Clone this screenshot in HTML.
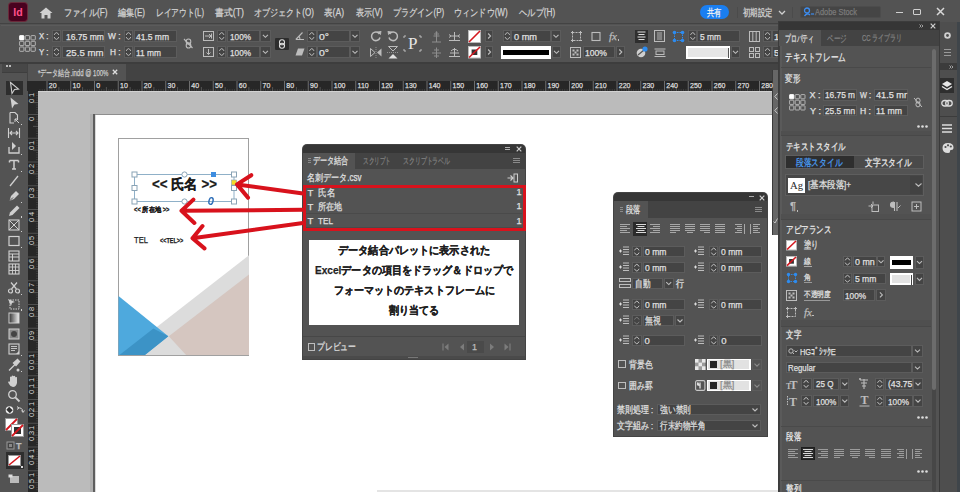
<!DOCTYPE html>
<html><head><meta charset="utf-8"><style>
*{margin:0;padding:0;box-sizing:border-box}
html,body{width:960px;height:492px;overflow:hidden;background:#535353;font-family:"Liberation Sans",sans-serif;color:#d4d4d4;position:relative}
.a{position:absolute}
.t{position:absolute;white-space:nowrap;line-height:1;transform-origin:0 50%;-webkit-text-stroke:0.25px currentColor}
svg.a{overflow:visible}
</style></head><body>
<div class="a" style="left:0px;top:0px;width:960px;height:24px;background:#535353;"></div>
<div class="a" style="left:0px;top:23px;width:960px;height:1px;background:#434343;"></div>
<div class="a" style="left:0px;top:24px;width:960px;height:38px;background:#535353;"></div>
<div class="a" style="left:1px;top:25px;width:958px;height:1px;background:#5b5b5b;"></div>
<div class="a" style="left:0px;top:62px;width:960px;height:2px;background:#3d3d3d;"></div>
<div class="a" style="left:0px;top:64px;width:27px;height:428px;background:#535353;"></div>
<div class="a" style="left:2px;top:64px;width:25px;height:9px;background:#474747;"></div>
<div class="a" style="left:2px;top:72px;width:25px;height:1px;background:#3e3e3e;"></div>
<svg class="a" style="left:6px;top:65px" width="6" height="3"><rect x="0" y="0" width="2" height="2" fill="#bbb"/><rect x="3" y="0" width="2" height="2" fill="#bbb"/></svg>
<div class="a" style="left:27px;top:64px;width:745px;height:17px;background:#434343;"></div>
<div class="a" style="left:28px;top:64px;width:98px;height:17px;background:#535353;"></div>
<div class="a" style="left:27px;top:81px;width:745px;height:10px;background:#272727;"></div>
<div class="a" style="left:28px;top:91px;width:10px;height:401px;background:#272727;"></div>
<div class="a" style="left:38px;top:91px;width:734px;height:401px;background:#bbbbbb;"></div>
<div class="a" style="left:94px;top:114px;width:685px;height:378px;background:#ffffff;"></div>
<div class="a" style="left:94px;top:114px;width:685px;height:1px;background:#8e8e8e;"></div>
<div class="a" style="left:90px;top:114px;width:2.7px;height:378px;background:#b0b0b0;"></div>
<div class="a" style="left:92.7px;top:114px;width:2px;height:378px;background:#5e5e5e;"></div>
<div class="a" style="left:94.7px;top:115px;width:1px;height:377px;background:#dadada;"></div>
<div class="a" style="left:772px;top:64px;width:7px;height:6px;background:#434343;"></div>
<div class="a" style="left:772px;top:70px;width:7px;height:165px;background:#535353;"></div>
<div class="a" style="left:772.5px;top:70px;width:5px;height:165px;background:#666666;"></div>
<div class="a" style="left:772px;top:70px;width:1px;height:165px;background:#3a3a3a;"></div>
<div class="a" style="left:9px;top:3px;width:18px;height:18px;background:#49021f;border-radius:3px;box-shadow:0 0 0 1px #6a2a3a"></div>
<div class="a" style="left:9px;top:3px;width:18px;height:18px;color:#ff4f8b;font:bold 10.5px/18px 'Liberation Sans',sans-serif;text-align:center">Id</div>
<svg class="a" style="left:39px;top:7px;" width="14" height="12" viewBox="0 0 14 12"><path d="M7 0.5 L13.5 6 L11.5 6 L11.5 11.5 L8.5 11.5 L8.5 8 L5.5 8 L5.5 11.5 L2.5 11.5 L2.5 6 L0.5 6 Z" fill="#d0d0d0"/></svg>
<div class="t" id="t0" style="left:64px;top:7.5px;font-size:10px;color:#d2d2d2;font-family:'Liberation Sans',sans-serif;transform:scaleX(0.824);">ファイル(F)</div>
<div class="t" id="t1" style="left:118px;top:7.5px;font-size:10px;color:#d2d2d2;font-family:'Liberation Sans',sans-serif;transform:scaleX(0.810);">編集(E)</div>
<div class="t" id="t2" style="left:156px;top:7.5px;font-size:10px;color:#d2d2d2;font-family:'Liberation Sans',sans-serif;transform:scaleX(0.771);">レイアウト(L)</div>
<div class="t" id="t3" style="left:215px;top:7.5px;font-size:10px;color:#d2d2d2;font-family:'Liberation Sans',sans-serif;transform:scaleX(0.885);">書式(T)</div>
<div class="t" id="t4" style="left:253.75px;top:7.5px;font-size:10px;color:#d2d2d2;font-family:'Liberation Sans',sans-serif;transform:scaleX(0.806);">オブジェクト(O)</div>
<div class="t" id="t5" style="left:323.75px;top:7.5px;font-size:10px;color:#d2d2d2;font-family:'Liberation Sans',sans-serif;transform:scaleX(0.857);">表(A)</div>
<div class="t" id="t6" style="left:355.5px;top:7.5px;font-size:10px;color:#d2d2d2;font-family:'Liberation Sans',sans-serif;transform:scaleX(0.801);">表示(V)</div>
<div class="t" id="t7" style="left:392.5px;top:7.5px;font-size:10px;color:#d2d2d2;font-family:'Liberation Sans',sans-serif;transform:scaleX(0.809);">プラグイン(P)</div>
<div class="t" id="t8" style="left:453.75px;top:7.5px;font-size:10px;color:#d2d2d2;font-family:'Liberation Sans',sans-serif;transform:scaleX(0.813);">ウィンドウ(W)</div>
<div class="t" id="t9" style="left:518.75px;top:7.5px;font-size:10px;color:#d2d2d2;font-family:'Liberation Sans',sans-serif;transform:scaleX(0.826);">ヘルプ(H)</div>
<div class="a" style="left:700.3px;top:4.7px;width:29px;height:14.8px;background:#1a7ef0;border-radius:7.4px"></div>
<div class="t" id="t10" style="left:707px;top:7.55px;font-size:9.5px;color:#f4f4f4;font-family:'Liberation Sans',sans-serif;transform:scaleX(0.725);">共有</div>
<div class="a" style="left:737px;top:7px;width:1px;height:11px;background:#4b4b4b;"></div>
<div class="t" id="t11" style="left:743px;top:7.75px;font-size:9.5px;color:#d4d4d4;font-family:'Liberation Sans',sans-serif;transform:scaleX(0.738);">初期設定</div>
<svg class="a" style="left:778px;top:10px;" width="8" height="5" viewBox="0 0 8 5"><path d="M1 1 L4 4 L7 1" stroke="#d0d0d0" stroke-width="1.3" fill="none"/></svg>
<div class="a" style="left:792px;top:7px;width:1px;height:11px;background:#4b4b4b;"></div>
<div class="a" style="left:800px;top:6px;width:81px;height:12px;background:#454545;border-radius:2px;border:1px solid #4c4c4c"></div>
<svg class="a" style="left:803px;top:7px;" width="12" height="10" viewBox="0 0 12 10"><circle cx="4" cy="3.5" r="2.5" stroke="#3d8df0" stroke-width="1.3" fill="none"/><path d="M1.5 9 Q4 5.5 7 8" stroke="#3d8df0" stroke-width="1.3" fill="none"/><path d="M8 7 L11 7" stroke="#3d8df0" stroke-width="1.2"/></svg>
<div class="t" id="t12" style="left:815px;top:8.25px;font-size:8.5px;color:#7b7b7b;font-family:'Liberation Sans',sans-serif;transform:scaleX(0.871);">Adobe Stock</div>
<div class="a" style="left:896px;top:11.5px;width:7px;height:1.5px;background:#d0d0d0;"></div>
<div class="a" style="left:913px;top:8.5px;width:8px;height:6px;border:1.5px solid #d0d0d0;border-radius:1px"></div>
<svg class="a" style="left:936px;top:7px;" width="9" height="9" viewBox="0 0 9 9"><path d="M1 1 L8 8 M8 1 L1 8" stroke="#d8d8d8" stroke-width="1.5"/></svg>
<svg class="a" style="left:19px;top:35px;" width="18" height="18" viewBox="0 0 18 18"><rect x="0.6" y="0.6" width="4.3" height="4.3" rx="0.5" fill="#ffffff" stroke="#ffffff" stroke-width="0.9"/><rect x="6.3" y="0.6" width="4.3" height="4.3" rx="0.5" fill="none" stroke="#bdbdbd" stroke-width="0.9"/><rect x="12.0" y="0.6" width="4.3" height="4.3" rx="0.5" fill="none" stroke="#bdbdbd" stroke-width="0.9"/><rect x="0.6" y="6.3" width="4.3" height="4.3" rx="0.5" fill="none" stroke="#bdbdbd" stroke-width="0.9"/><rect x="6.3" y="6.3" width="4.3" height="4.3" rx="0.5" fill="none" stroke="#bdbdbd" stroke-width="0.9"/><rect x="12.0" y="6.3" width="4.3" height="4.3" rx="0.5" fill="none" stroke="#bdbdbd" stroke-width="0.9"/><rect x="0.6" y="12.0" width="4.3" height="4.3" rx="0.5" fill="none" stroke="#bdbdbd" stroke-width="0.9"/><rect x="6.3" y="12.0" width="4.3" height="4.3" rx="0.5" fill="none" stroke="#bdbdbd" stroke-width="0.9"/><rect x="12.0" y="12.0" width="4.3" height="4.3" rx="0.5" fill="none" stroke="#bdbdbd" stroke-width="0.9"/></svg>
<div class="t" id="t13" style="left:38.5px;top:32px;font-size:9px;color:#e0e0e0;font-family:'Liberation Sans',sans-serif;transform:scaleX(0.862);">X :</div>
<div class="t" id="t14" style="left:38.5px;top:48px;font-size:9px;color:#e0e0e0;font-family:'Liberation Sans',sans-serif;transform:scaleX(0.876);">Y :</div>
<div class="a" style="left:52px;top:30px;width:9px;height:12px;background:#444444;border:1px solid #5c5c5c;"></div>
<svg class="a" style="left:52px;top:30px;" width="9" height="12" viewBox="0 0 9 12"><path d="M2.2 4.9 Q4.5 0.4 6.8 4.9 M2.2 7.1 Q4.5 11.6 6.8 7.1" stroke="#bdbdbd" stroke-width="1" fill="none"/></svg>
<div class="a" style="left:62px;top:30px;width:43px;height:12px;background:#444444;border:1px solid #5c5c5c;"></div>
<div class="t" id="t15" style="left:65.5px;top:31.75px;font-size:9.5px;color:#e0e0e0;font-family:'Liberation Sans',sans-serif;transform:scaleX(0.899);">16.75 mm</div>
<div class="a" style="left:52px;top:46px;width:9px;height:12px;background:#444444;border:1px solid #5c5c5c;"></div>
<svg class="a" style="left:52px;top:46px;" width="9" height="12" viewBox="0 0 9 12"><path d="M2.2 4.9 Q4.5 0.4 6.8 4.9 M2.2 7.1 Q4.5 11.6 6.8 7.1" stroke="#bdbdbd" stroke-width="1" fill="none"/></svg>
<div class="a" style="left:62px;top:46px;width:43px;height:12px;background:#444444;border:1px solid #5c5c5c;"></div>
<div class="t" id="t16" style="left:65.5px;top:47.75px;font-size:9.5px;color:#e0e0e0;font-family:'Liberation Sans',sans-serif;transform:scaleX(1.014);">25.5 mm</div>
<div class="t" id="t17" style="left:108.3px;top:32px;font-size:9px;color:#e0e0e0;font-family:'Liberation Sans',sans-serif;transform:scaleX(0.926);">W :</div>
<div class="t" id="t18" style="left:109.8px;top:48px;font-size:9px;color:#e0e0e0;font-family:'Liberation Sans',sans-serif;transform:scaleX(0.920);">H :</div>
<div class="a" style="left:124px;top:30px;width:9px;height:12px;background:#444444;border:1px solid #5c5c5c;"></div>
<svg class="a" style="left:124px;top:30px;" width="9" height="12" viewBox="0 0 9 12"><path d="M2.2 4.9 Q4.5 0.4 6.8 4.9 M2.2 7.1 Q4.5 11.6 6.8 7.1" stroke="#bdbdbd" stroke-width="1" fill="none"/></svg>
<div class="a" style="left:134px;top:30px;width:43px;height:12px;background:#444444;border:1px solid #5c5c5c;"></div>
<div class="t" id="t19" style="left:136px;top:31.75px;font-size:9.5px;color:#e0e0e0;font-family:'Liberation Sans',sans-serif;transform:scaleX(0.893);">41.5 mm</div>
<div class="a" style="left:124px;top:46px;width:9px;height:12px;background:#444444;border:1px solid #5c5c5c;"></div>
<svg class="a" style="left:124px;top:46px;" width="9" height="12" viewBox="0 0 9 12"><path d="M2.2 4.9 Q4.5 0.4 6.8 4.9 M2.2 7.1 Q4.5 11.6 6.8 7.1" stroke="#bdbdbd" stroke-width="1" fill="none"/></svg>
<div class="a" style="left:134px;top:46px;width:43px;height:12px;background:#444444;border:1px solid #5c5c5c;"></div>
<div class="t" id="t20" style="left:136px;top:47.75px;font-size:9.5px;color:#e0e0e0;font-family:'Liberation Sans',sans-serif;transform:scaleX(0.882);">11 mm</div>
<svg class="a" style="left:183px;top:38px;" width="11" height="11" viewBox="0 0 11 11"><ellipse cx="5.5" cy="3.6" rx="2.3" ry="2.6" fill="none" stroke="#bcbcbc" stroke-width="1.1"/><ellipse cx="5.5" cy="7.4" rx="2.3" ry="2.6" fill="none" stroke="#bcbcbc" stroke-width="1.1"/><path d="M1 1 L9.5 10" stroke="#bcbcbc" stroke-width="1.1"/></svg>
<svg class="a" style="left:203px;top:30px;" width="11" height="12" viewBox="0 0 11 12"><rect x="0.5" y="1.5" width="10" height="9" fill="none" stroke="#bcbcbc" stroke-width="1"/><path d="M2 6 L8 6 M6 4 L8 6 L6 8 M8.5 3.5 L8.5 8.5" stroke="#bcbcbc" stroke-width="1" fill="none"/></svg>
<svg class="a" style="left:203px;top:46px;" width="11" height="12" viewBox="0 0 11 12"><rect x="0.5" y="1.5" width="10" height="9" fill="none" stroke="#bcbcbc" stroke-width="1"/><path d="M5.5 3 L5.5 8.5 M3.5 6.5 L5.5 8.5 L7.5 6.5" stroke="#bcbcbc" stroke-width="1" fill="none"/></svg>
<div class="a" style="left:216.7px;top:30px;width:9.3px;height:12px;background:#444444;border:1px solid #5c5c5c;"></div>
<svg class="a" style="left:216.7px;top:30px;" width="9.3" height="12" viewBox="0 0 9.3 12"><path d="M2.4 4.9 Q4.7 0.4 7.0 4.9 M2.4 7.1 Q4.7 11.6 7.0 7.1" stroke="#bdbdbd" stroke-width="1" fill="none"/></svg>
<div class="a" style="left:226.5px;top:30px;width:33px;height:12px;background:#444444;border:1px solid #5c5c5c;"></div>
<div class="t" id="t21" style="left:229.6px;top:31.75px;font-size:9.5px;color:#e0e0e0;font-family:'Liberation Sans',sans-serif;transform:scaleX(0.864);">100%</div>
<div class="a" style="left:260px;top:30px;width:10.8px;height:12px;background:#444444;border:1px solid #5c5c5c;"></div>
<svg class="a" style="left:260px;top:30px;" width="10.8" height="12" viewBox="0 0 10.8 12"><path d="M2.9 4.8 L5.4 7.3 L7.9 4.8" stroke="#bdbdbd" stroke-width="1.1" fill="none"/></svg>
<div class="a" style="left:216.7px;top:46px;width:9.3px;height:12px;background:#444444;border:1px solid #5c5c5c;"></div>
<svg class="a" style="left:216.7px;top:46px;" width="9.3" height="12" viewBox="0 0 9.3 12"><path d="M2.4 4.9 Q4.7 0.4 7.0 4.9 M2.4 7.1 Q4.7 11.6 7.0 7.1" stroke="#bdbdbd" stroke-width="1" fill="none"/></svg>
<div class="a" style="left:226.5px;top:46px;width:33px;height:12px;background:#444444;border:1px solid #5c5c5c;"></div>
<div class="t" id="t22" style="left:229.6px;top:47.75px;font-size:9.5px;color:#e0e0e0;font-family:'Liberation Sans',sans-serif;transform:scaleX(0.864);">100%</div>
<div class="a" style="left:260px;top:46px;width:10.8px;height:12px;background:#444444;border:1px solid #5c5c5c;"></div>
<svg class="a" style="left:260px;top:46px;" width="10.8" height="12" viewBox="0 0 10.8 12"><path d="M2.9 4.8 L5.4 7.3 L7.9 4.8" stroke="#bdbdbd" stroke-width="1.1" fill="none"/></svg>
<div class="a" style="left:275px;top:37.5px;width:14px;height:12.5px;background:#2d2d2d;border-radius:1px"></div>
<svg class="a" style="left:278px;top:39px;" width="8" height="10" viewBox="0 0 8 10"><rect x="1.5" y="0.8" width="5" height="5" rx="2.4" fill="none" stroke="#e0e0e0" stroke-width="1.1"/><rect x="1.5" y="4.2" width="5" height="5" rx="2.4" fill="none" stroke="#e0e0e0" stroke-width="1.1"/></svg>
<svg class="a" style="left:295px;top:31px;" width="10" height="10" viewBox="0 0 10 10"><path d="M0.8 8.5 L9 8.5 M0.8 8.5 L7.5 1.5 M5 8.5 Q5 6 3.5 5" stroke="#bcbcbc" stroke-width="1.1" fill="none"/></svg>
<svg class="a" style="left:295px;top:47px;" width="10" height="10" viewBox="0 0 10 10"><path d="M3 1.5 L9.5 1.5 L7 8.5 L0.5 8.5 Z" fill="#bcbcbc"/></svg>
<div class="a" style="left:307px;top:30px;width:9.5px;height:12px;background:#444444;border:1px solid #5c5c5c;"></div>
<svg class="a" style="left:307px;top:30px;" width="9.5" height="12" viewBox="0 0 9.5 12"><path d="M2.5 4.9 Q4.8 0.4 7.0 4.9 M2.5 7.1 Q4.8 11.6 7.0 7.1" stroke="#bdbdbd" stroke-width="1" fill="none"/></svg>
<div class="a" style="left:316.5px;top:30px;width:33.5px;height:12px;background:#444444;border:1px solid #5c5c5c;"></div>
<div class="t" id="t23" style="left:319px;top:31.75px;font-size:9.5px;color:#e0e0e0;font-family:'Liberation Sans',sans-serif;transform:scaleX(1.100);">0°</div>
<div class="a" style="left:350px;top:30px;width:10px;height:12px;background:#444444;border:1px solid #5c5c5c;"></div>
<svg class="a" style="left:350px;top:30px;" width="10" height="12" viewBox="0 0 10 12"><path d="M2.5 4.8 L5.0 7.3 L7.5 4.8" stroke="#bdbdbd" stroke-width="1.1" fill="none"/></svg>
<div class="a" style="left:307px;top:46px;width:9.5px;height:12px;background:#444444;border:1px solid #5c5c5c;"></div>
<svg class="a" style="left:307px;top:46px;" width="9.5" height="12" viewBox="0 0 9.5 12"><path d="M2.5 4.9 Q4.8 0.4 7.0 4.9 M2.5 7.1 Q4.8 11.6 7.0 7.1" stroke="#bdbdbd" stroke-width="1" fill="none"/></svg>
<div class="a" style="left:316.5px;top:46px;width:33.5px;height:12px;background:#444444;border:1px solid #5c5c5c;"></div>
<div class="t" id="t24" style="left:319px;top:47.75px;font-size:9.5px;color:#e0e0e0;font-family:'Liberation Sans',sans-serif;transform:scaleX(1.100);">0°</div>
<div class="a" style="left:350px;top:46px;width:10px;height:12px;background:#444444;border:1px solid #5c5c5c;"></div>
<svg class="a" style="left:350px;top:46px;" width="10" height="12" viewBox="0 0 10 12"><path d="M2.5 4.8 L5.0 7.3 L7.5 4.8" stroke="#bdbdbd" stroke-width="1.1" fill="none"/></svg>
<svg class="a" style="left:370px;top:30px;" width="12" height="12" viewBox="0 0 12 12"><path d="M9.5 4 A4.3 4.3 0 1 0 10 7.5" stroke="#bcbcbc" stroke-width="1.5" fill="none"/><path d="M7.5 1.5 L10.5 4.5 L11 1" fill="#bcbcbc" stroke="#bcbcbc" stroke-width="0.8"/></svg>
<svg class="a" style="left:387px;top:30px;" width="12" height="12" viewBox="0 0 12 12"><path d="M2.5 4 A4.3 4.3 0 1 1 2 7.5" stroke="#bcbcbc" stroke-width="1.5" fill="none"/><path d="M4.5 1.5 L1.5 4.5 L1 1" fill="#bcbcbc" stroke="#bcbcbc" stroke-width="0.8"/></svg>
<svg class="a" style="left:370px;top:47px;" width="12" height="11" viewBox="0 0 12 11"><path d="M0.5 1.5 L5 5.5 L0.5 9.5 Z" fill="none" stroke="#bcbcbc" stroke-width="1"/><path d="M11.5 1.5 L7 5.5 L11.5 9.5 Z" fill="#bcbcbc"/><path d="M6 0 L6 11" stroke="#bcbcbc" stroke-width="0.6" stroke-dasharray="1 1"/></svg>
<svg class="a" style="left:387px;top:46px;" width="12" height="13" viewBox="0 0 12 13"><path d="M1.5 0.5 L6 5 L10.5 0.5 Z" fill="none" stroke="#bcbcbc" stroke-width="1"/><path d="M1.5 12.5 L6 8 L10.5 12.5 Z" fill="#e0e0e0"/><path d="M0 6.5 L12 6.5" stroke="#bcbcbc" stroke-width="0.6" stroke-dasharray="1 1"/></svg>
<div class="t" id="t25" style="left:407.5px;top:36px;font-size:16px;color:#e6e6e6;font-family:'Liberation Serif',serif;transform:scaleX(1.067);-webkit-text-stroke:0;">P</div>
<svg class="a" style="left:403px;top:34px;" width="19" height="19" viewBox="0 0 19 19"><path d="M1 4 L1 2 M1 2 L3 2 M16 2 L18 2 L18 4 M1 15 L1 17 L3 17 M16 17 L18 17 L18 15" stroke="#bcbcbc" stroke-width="1" fill="none"/></svg>
<svg class="a" style="left:431px;top:31px;" width="11" height="12" viewBox="0 0 11 12"><path d="M5.5 0.5 L5.5 11 M2.5 5 L8.5 5 M1 11 L10 11 M3 3 L8 3" stroke="#8e8e8e" stroke-width="1" fill="none"/><circle cx="5.5" cy="1.5" r="1" fill="#8e8e8e"/></svg>
<svg class="a" style="left:431px;top:47px;" width="11" height="12" viewBox="0 0 11 12"><path d="M5.5 0.5 L5.5 11 M1 6 L10 6 M3 3 L8 3 M3 9 L8 9" stroke="#8e8e8e" stroke-width="1" fill="none"/></svg>
<svg class="a" style="left:448px;top:31px;" width="13" height="11" viewBox="0 0 13 11"><path d="M6.5 1 L6.5 10 M1 9.5 L12 9.5 M3 5 L10 5 M1 6.5 L3 5 L1 3.5 M12 6.5 L10 5 L12 3.5" stroke="#bcbcbc" stroke-width="1" fill="none"/></svg>
<svg class="a" style="left:448px;top:47px;" width="13" height="11" viewBox="0 0 13 11"><path d="M6.5 1 L6.5 10 M1 9.5 L12 9.5 M2 6 L11 6 M3 4 Q6.5 0.5 10 4" stroke="#bcbcbc" stroke-width="1" fill="none"/></svg>
<svg class="a" style="left:468px;top:29.5px;" width="13" height="13" viewBox="0 0 13 13"><rect x="0.5" y="0.5" width="12" height="12" fill="#ffffff" stroke="#bbbbbb" stroke-width="1"/><path d="M1 12 L12 1" stroke="#d4181f" stroke-width="1.6"/></svg>
<svg class="a" style="left:468px;top:46px;" width="13" height="12.5" viewBox="0 0 13 12.5"><rect x="0.5" y="0.5" width="12" height="11.5" fill="#ffffff" stroke="#bbbbbb" stroke-width="1"/><rect x="3.6" y="3.5" width="5.7" height="5.5" fill="#333" /><path d="M1 11.5 L12 1" stroke="#d4181f" stroke-width="1.6"/></svg>
<div class="a" style="left:484.6px;top:30px;width:8.6px;height:12px;background:#444444;border:1px solid #5c5c5c;"></div>
<svg class="a" style="left:484.6px;top:30px;" width="8.6" height="12" viewBox="0 0 8.6 12"><path d="M3.1 3.5 L5.6 6.0 L3.1 8.5" stroke="#bdbdbd" stroke-width="1.1" fill="none"/></svg>
<div class="a" style="left:484.6px;top:46px;width:8.6px;height:12px;background:#444444;border:1px solid #5c5c5c;"></div>
<svg class="a" style="left:484.6px;top:46px;" width="8.6" height="12" viewBox="0 0 8.6 12"><path d="M3.1 3.5 L5.6 6.0 L3.1 8.5" stroke="#bdbdbd" stroke-width="1.1" fill="none"/></svg>
<div class="a" style="left:502.5px;top:30px;width:8.8px;height:12px;background:#444444;border:1px solid #5c5c5c;"></div>
<svg class="a" style="left:502.5px;top:30px;" width="8.8" height="12" viewBox="0 0 8.8 12"><path d="M2.1 4.9 Q4.4 0.4 6.7 4.9 M2.1 7.1 Q4.4 11.6 6.7 7.1" stroke="#bdbdbd" stroke-width="1" fill="none"/></svg>
<div class="a" style="left:511px;top:30px;width:40px;height:12px;background:#444444;border:1px solid #5c5c5c;"></div>
<div class="t" id="t26" style="left:514px;top:31.75px;font-size:9.5px;color:#e0e0e0;font-family:'Liberation Sans',sans-serif;transform:scaleX(0.968);">0 mm</div>
<div class="a" style="left:551px;top:30px;width:10px;height:12px;background:#444444;border:1px solid #5c5c5c;"></div>
<svg class="a" style="left:551px;top:30px;" width="10" height="12" viewBox="0 0 10 12"><path d="M2.5 4.8 L5.0 7.3 L7.5 4.8" stroke="#bdbdbd" stroke-width="1.1" fill="none"/></svg>
<div class="a" style="left:501px;top:46px;width:50px;height:12.5px;background:#ffffff;"></div>
<div class="a" style="left:503px;top:49.5px;width:46px;height:5.5px;background:#000000;"></div>
<div class="a" style="left:552px;top:46px;width:9px;height:12px;background:#444444;border:1px solid #5c5c5c;"></div>
<svg class="a" style="left:552px;top:46px;" width="9" height="12" viewBox="0 0 9 12"><path d="M2.0 4.8 L4.5 7.3 L7.0 4.8" stroke="#bdbdbd" stroke-width="1.1" fill="none"/></svg>
<svg class="a" style="left:571px;top:31px;" width="11" height="11" viewBox="0 0 11 11"><rect x="1.5" y="1.5" width="8" height="8" fill="none" stroke="#bcbcbc" stroke-width="1" stroke-dasharray="2 1"/><path d="M0 1.5 L3 1.5 M1.5 0 L1.5 3 M8 1.5 L11 1.5 M9.5 0 L9.5 3 M0 9.5 L3 9.5 M1.5 8 L1.5 11 M8 9.5 L11 9.5" stroke="#bcbcbc" stroke-width="1"/></svg>
<svg class="a" style="left:591px;top:31px;" width="10" height="11" viewBox="0 0 10 11"><rect x="1" y="1.5" width="8" height="8" fill="none" stroke="#bcbcbc" stroke-width="1.1"/></svg>
<div class="t" id="t27" style="left:609px;top:31px;font-size:11px;color:#bcbcbc;font-family:'Liberation Serif',serif;transform:scaleX(1.006);"><i>fx</i></div>
<div class="a" style="left:617.5px;top:39px;width:1.5px;height:1.5px;background:#bcbcbc;"></div>
<svg class="a" style="left:570px;top:47px;" width="11" height="11" viewBox="0 0 11 11"><rect x="0.5" y="0.5" width="10" height="10" fill="none" stroke="#bcbcbc" stroke-width="1"/><rect x="2.5" y="2.5" width="2" height="2" fill="#bcbcbc"/><rect x="6.5" y="2.5" width="2" height="2" fill="#bcbcbc"/><rect x="4.5" y="4.5" width="2" height="2" fill="#bcbcbc"/><rect x="2.5" y="6.5" width="2" height="2" fill="#bcbcbc"/><rect x="6.5" y="6.5" width="2" height="2" fill="#bcbcbc"/></svg>
<div class="a" style="left:582.5px;top:46px;width:32.5px;height:12px;background:#444444;border:1px solid #5c5c5c;"></div>
<div class="t" id="t28" style="left:585px;top:47.75px;font-size:9.5px;color:#e0e0e0;font-family:'Liberation Sans',sans-serif;transform:scaleX(0.905);">100%</div>
<div class="a" style="left:616px;top:46px;width:9px;height:12px;background:#444444;border:1px solid #5c5c5c;"></div>
<svg class="a" style="left:616px;top:46px;" width="9" height="12" viewBox="0 0 9 12"><path d="M3.3 3.5 L5.8 6.0 L3.3 8.5" stroke="#bdbdbd" stroke-width="1.1" fill="none"/></svg>
<div class="a" style="left:635px;top:29.5px;width:13px;height:13px;background:#2e2e2e;"></div>
<svg class="a" style="left:637px;top:31px;" width="9" height="10" viewBox="0 0 9 10"><path d="M0.5 1 L8.5 1 M1.5 3.5 L7.5 3.5 M0.5 6 L8.5 6 M1.5 8.5 L7.5 8.5" stroke="#e0e0e0" stroke-width="1.1"/></svg>
<svg class="a" style="left:654px;top:30px;" width="11" height="12" viewBox="0 0 11 12"><rect x="0.5" y="0.5" width="10" height="11" fill="none" stroke="#bcbcbc" stroke-width="1"/><path d="M3 3 L8 3 M3 5 L8 5 M3 7 L8 7 M3 9 L8 9" stroke="#bcbcbc" stroke-width="0.9"/></svg>
<svg class="a" style="left:636px;top:46px;" width="12" height="12" viewBox="0 0 12 12"><circle cx="5" cy="7" r="4.3" fill="#cfcfcf"/><path d="M2 9 L8 4" stroke="#555" stroke-width="1.2"/><circle cx="9" cy="3" r="2.6" fill="#2d8cf0"/></svg>
<svg class="a" style="left:654px;top:47px;" width="12" height="11" viewBox="0 0 12 11"><path d="M0.5 2 L11.5 2 M0.5 9.5 L11.5 9.5" stroke="#bcbcbc" stroke-width="1.1"/><rect x="2" y="4" width="8" height="3.5" fill="none" stroke="#bcbcbc" stroke-width="1"/></svg>
<svg class="a" style="left:672px;top:30px;" width="13" height="13" viewBox="0 0 13 13"><rect x="2.5" y="2.5" width="8" height="8" fill="none" stroke="#2d8cf0" stroke-width="1" stroke-dasharray="1.5 1"/><circle cx="2.5" cy="2.5" r="1.8" fill="#2d8cf0"/><circle cx="10.5" cy="2.5" r="1.8" fill="#2d8cf0"/><circle cx="2.5" cy="10.5" r="1.8" fill="#2d8cf0"/><circle cx="10.5" cy="10.5" r="1.8" fill="#2d8cf0"/></svg>
<div class="a" style="left:687.5px;top:30px;width:9.5px;height:12px;background:#444444;border:1px solid #5c5c5c;"></div>
<svg class="a" style="left:687.5px;top:30px;" width="9.5" height="12" viewBox="0 0 9.5 12"><path d="M2.5 4.9 Q4.8 0.4 7.0 4.9 M2.5 7.1 Q4.8 11.6 7.0 7.1" stroke="#bdbdbd" stroke-width="1" fill="none"/></svg>
<div class="a" style="left:697px;top:30px;width:43px;height:12px;background:#444444;border:1px solid #5c5c5c;"></div>
<div class="t" id="t29" style="left:700px;top:31.75px;font-size:9.5px;color:#e0e0e0;font-family:'Liberation Sans',sans-serif;transform:scaleX(0.884);">5 mm</div>
<div class="a" style="left:686px;top:46px;width:43.5px;height:12.75px;background:#ffffff;"></div>
<div class="a" style="left:688px;top:48px;width:39.5px;height:8.75px;background:#e6e6e6;"></div>
<div class="a" style="left:727.5px;top:48px;width:1.5px;height:10px;background:#555;"></div>
<div class="a" style="left:731px;top:46px;width:9px;height:12px;background:#444444;border:1px solid #5c5c5c;"></div>
<svg class="a" style="left:731px;top:46px;" width="9" height="12" viewBox="0 0 9 12"><path d="M2.0 4.8 L4.5 7.3 L7.0 4.8" stroke="#bdbdbd" stroke-width="1.1" fill="none"/></svg>
<svg class="a" style="left:749px;top:31px;" width="11" height="11" viewBox="0 0 11 11"><rect x="0.5" y="0.5" width="10" height="10" fill="none" stroke="#bcbcbc" stroke-width="1"/><path d="M3.8 0.5 L3.8 10.5 M7.2 0.5 L7.2 10.5" stroke="#bcbcbc" stroke-width="1"/></svg>
<svg class="a" style="left:749px;top:47px;" width="11" height="11" viewBox="0 0 11 11"><rect x="0.5" y="0.5" width="4" height="4" fill="none" stroke="#bcbcbc" stroke-width="1"/><rect x="6.5" y="0.5" width="4" height="4" fill="none" stroke="#bcbcbc" stroke-width="1"/><rect x="0.5" y="6.5" width="4" height="4" fill="none" stroke="#bcbcbc" stroke-width="1"/><rect x="6.5" y="6.5" width="4" height="4" fill="none" stroke="#bcbcbc" stroke-width="1"/></svg>
<div class="a" style="left:762.5px;top:30px;width:9px;height:12px;background:#444444;border:1px solid #5c5c5c;"></div>
<svg class="a" style="left:762.5px;top:30px;" width="9" height="12" viewBox="0 0 9 12"><path d="M2.2 4.9 Q4.5 0.4 6.8 4.9 M2.2 7.1 Q4.5 11.6 6.8 7.1" stroke="#bdbdbd" stroke-width="1" fill="none"/></svg>
<div class="a" style="left:762.5px;top:46px;width:9px;height:12px;background:#444444;border:1px solid #5c5c5c;"></div>
<svg class="a" style="left:762.5px;top:46px;" width="9" height="12" viewBox="0 0 9 12"><path d="M2.2 4.9 Q4.5 0.4 6.8 4.9 M2.2 7.1 Q4.5 11.6 6.8 7.1" stroke="#bdbdbd" stroke-width="1" fill="none"/></svg>
<div class="a" style="left:772px;top:30px;width:10px;height:12px;background:#444444;border:1px solid #5c5c5c;"></div>
<div class="t" id="t30" style="left:774px;top:31.75px;font-size:9.5px;color:#e0e0e0;font-family:'Liberation Sans',sans-serif;">1</div>
<div class="a" style="left:772px;top:46px;width:10px;height:12px;background:#444444;border:1px solid #5c5c5c;"></div>
<div class="t" id="t31" style="left:774px;top:47.75px;font-size:9.5px;color:#e0e0e0;font-family:'Liberation Sans',sans-serif;">5</div>
<div class="t" id="t32" style="left:37.5px;top:68.5px;font-size:9px;color:#cccccc;font-family:'Liberation Sans',sans-serif;transform:scaleX(0.670);">*データ結合.indd @ 100%</div>
<svg class="a" style="left:112px;top:69px;" width="6" height="6" viewBox="0 0 6 6"><path d="M0.8 0.8 L5.2 5.2 M5.2 0.8 L0.8 5.2" stroke="#dddddd" stroke-width="1.3"/></svg>
<svg class="a" style="left:27px;top:81px;" width="745" height="10" viewBox="0 0 745 10"><line x1="12.88" y1="8" x2="12.88" y2="10" stroke="#444" stroke-width="0.8"/><line x1="15.25" y1="8" x2="15.25" y2="10" stroke="#444" stroke-width="0.8"/><line x1="17.62" y1="8" x2="17.62" y2="10" stroke="#444" stroke-width="0.8"/><line x1="20.00" y1="0" x2="20.00" y2="10" stroke="#6e6e6e" stroke-width="1"/><line x1="22.38" y1="8" x2="22.38" y2="10" stroke="#444" stroke-width="0.8"/><line x1="24.75" y1="8" x2="24.75" y2="10" stroke="#444" stroke-width="0.8"/><line x1="27.12" y1="8" x2="27.12" y2="10" stroke="#444" stroke-width="0.8"/><line x1="29.50" y1="8" x2="29.50" y2="10" stroke="#444" stroke-width="0.8"/><line x1="31.88" y1="6" x2="31.88" y2="10" stroke="#555" stroke-width="1"/><line x1="34.25" y1="8" x2="34.25" y2="10" stroke="#444" stroke-width="0.8"/><line x1="36.62" y1="8" x2="36.62" y2="10" stroke="#444" stroke-width="0.8"/><line x1="39.00" y1="8" x2="39.00" y2="10" stroke="#444" stroke-width="0.8"/><line x1="41.38" y1="8" x2="41.38" y2="10" stroke="#444" stroke-width="0.8"/><line x1="43.75" y1="0" x2="43.75" y2="10" stroke="#6e6e6e" stroke-width="1"/><line x1="46.12" y1="8" x2="46.12" y2="10" stroke="#444" stroke-width="0.8"/><line x1="48.50" y1="8" x2="48.50" y2="10" stroke="#444" stroke-width="0.8"/><line x1="50.88" y1="8" x2="50.88" y2="10" stroke="#444" stroke-width="0.8"/><line x1="53.25" y1="8" x2="53.25" y2="10" stroke="#444" stroke-width="0.8"/><line x1="55.62" y1="6" x2="55.62" y2="10" stroke="#555" stroke-width="1"/><line x1="58.00" y1="8" x2="58.00" y2="10" stroke="#444" stroke-width="0.8"/><line x1="60.38" y1="8" x2="60.38" y2="10" stroke="#444" stroke-width="0.8"/><line x1="62.75" y1="8" x2="62.75" y2="10" stroke="#444" stroke-width="0.8"/><line x1="65.12" y1="8" x2="65.12" y2="10" stroke="#444" stroke-width="0.8"/><line x1="67.50" y1="0" x2="67.50" y2="10" stroke="#6e6e6e" stroke-width="1"/><line x1="69.88" y1="8" x2="69.88" y2="10" stroke="#444" stroke-width="0.8"/><line x1="72.25" y1="8" x2="72.25" y2="10" stroke="#444" stroke-width="0.8"/><line x1="74.62" y1="8" x2="74.62" y2="10" stroke="#444" stroke-width="0.8"/><line x1="77.00" y1="8" x2="77.00" y2="10" stroke="#444" stroke-width="0.8"/><line x1="79.38" y1="6" x2="79.38" y2="10" stroke="#555" stroke-width="1"/><line x1="81.75" y1="8" x2="81.75" y2="10" stroke="#444" stroke-width="0.8"/><line x1="84.12" y1="8" x2="84.12" y2="10" stroke="#444" stroke-width="0.8"/><line x1="86.50" y1="8" x2="86.50" y2="10" stroke="#444" stroke-width="0.8"/><line x1="88.88" y1="8" x2="88.88" y2="10" stroke="#444" stroke-width="0.8"/><line x1="91.25" y1="0" x2="91.25" y2="10" stroke="#6e6e6e" stroke-width="1"/><line x1="93.62" y1="8" x2="93.62" y2="10" stroke="#444" stroke-width="0.8"/><line x1="96.00" y1="8" x2="96.00" y2="10" stroke="#444" stroke-width="0.8"/><line x1="98.38" y1="8" x2="98.38" y2="10" stroke="#444" stroke-width="0.8"/><line x1="100.75" y1="8" x2="100.75" y2="10" stroke="#444" stroke-width="0.8"/><line x1="103.12" y1="6" x2="103.12" y2="10" stroke="#555" stroke-width="1"/><line x1="105.50" y1="8" x2="105.50" y2="10" stroke="#444" stroke-width="0.8"/><line x1="107.88" y1="8" x2="107.88" y2="10" stroke="#444" stroke-width="0.8"/><line x1="110.25" y1="8" x2="110.25" y2="10" stroke="#444" stroke-width="0.8"/><line x1="112.62" y1="8" x2="112.62" y2="10" stroke="#444" stroke-width="0.8"/><line x1="115.00" y1="0" x2="115.00" y2="10" stroke="#6e6e6e" stroke-width="1"/><line x1="117.38" y1="8" x2="117.38" y2="10" stroke="#444" stroke-width="0.8"/><line x1="119.75" y1="8" x2="119.75" y2="10" stroke="#444" stroke-width="0.8"/><line x1="122.12" y1="8" x2="122.12" y2="10" stroke="#444" stroke-width="0.8"/><line x1="124.50" y1="8" x2="124.50" y2="10" stroke="#444" stroke-width="0.8"/><line x1="126.88" y1="6" x2="126.88" y2="10" stroke="#555" stroke-width="1"/><line x1="129.25" y1="8" x2="129.25" y2="10" stroke="#444" stroke-width="0.8"/><line x1="131.62" y1="8" x2="131.62" y2="10" stroke="#444" stroke-width="0.8"/><line x1="134.00" y1="8" x2="134.00" y2="10" stroke="#444" stroke-width="0.8"/><line x1="136.38" y1="8" x2="136.38" y2="10" stroke="#444" stroke-width="0.8"/><line x1="138.75" y1="0" x2="138.75" y2="10" stroke="#6e6e6e" stroke-width="1"/><line x1="141.12" y1="8" x2="141.12" y2="10" stroke="#444" stroke-width="0.8"/><line x1="143.50" y1="8" x2="143.50" y2="10" stroke="#444" stroke-width="0.8"/><line x1="145.88" y1="8" x2="145.88" y2="10" stroke="#444" stroke-width="0.8"/><line x1="148.25" y1="8" x2="148.25" y2="10" stroke="#444" stroke-width="0.8"/><line x1="150.62" y1="6" x2="150.62" y2="10" stroke="#555" stroke-width="1"/><line x1="153.00" y1="8" x2="153.00" y2="10" stroke="#444" stroke-width="0.8"/><line x1="155.38" y1="8" x2="155.38" y2="10" stroke="#444" stroke-width="0.8"/><line x1="157.75" y1="8" x2="157.75" y2="10" stroke="#444" stroke-width="0.8"/><line x1="160.12" y1="8" x2="160.12" y2="10" stroke="#444" stroke-width="0.8"/><line x1="162.50" y1="0" x2="162.50" y2="10" stroke="#6e6e6e" stroke-width="1"/><line x1="164.88" y1="8" x2="164.88" y2="10" stroke="#444" stroke-width="0.8"/><line x1="167.25" y1="8" x2="167.25" y2="10" stroke="#444" stroke-width="0.8"/><line x1="169.62" y1="8" x2="169.62" y2="10" stroke="#444" stroke-width="0.8"/><line x1="172.00" y1="8" x2="172.00" y2="10" stroke="#444" stroke-width="0.8"/><line x1="174.38" y1="6" x2="174.38" y2="10" stroke="#555" stroke-width="1"/><line x1="176.75" y1="8" x2="176.75" y2="10" stroke="#444" stroke-width="0.8"/><line x1="179.12" y1="8" x2="179.12" y2="10" stroke="#444" stroke-width="0.8"/><line x1="181.50" y1="8" x2="181.50" y2="10" stroke="#444" stroke-width="0.8"/><line x1="183.88" y1="8" x2="183.88" y2="10" stroke="#444" stroke-width="0.8"/><line x1="186.25" y1="0" x2="186.25" y2="10" stroke="#6e6e6e" stroke-width="1"/><line x1="188.62" y1="8" x2="188.62" y2="10" stroke="#444" stroke-width="0.8"/><line x1="191.00" y1="8" x2="191.00" y2="10" stroke="#444" stroke-width="0.8"/><line x1="193.38" y1="8" x2="193.38" y2="10" stroke="#444" stroke-width="0.8"/><line x1="195.75" y1="8" x2="195.75" y2="10" stroke="#444" stroke-width="0.8"/><line x1="198.12" y1="6" x2="198.12" y2="10" stroke="#555" stroke-width="1"/><line x1="200.50" y1="8" x2="200.50" y2="10" stroke="#444" stroke-width="0.8"/><line x1="202.88" y1="8" x2="202.88" y2="10" stroke="#444" stroke-width="0.8"/><line x1="205.25" y1="8" x2="205.25" y2="10" stroke="#444" stroke-width="0.8"/><line x1="207.62" y1="8" x2="207.62" y2="10" stroke="#444" stroke-width="0.8"/><line x1="210.00" y1="0" x2="210.00" y2="10" stroke="#6e6e6e" stroke-width="1"/><line x1="212.38" y1="8" x2="212.38" y2="10" stroke="#444" stroke-width="0.8"/><line x1="214.75" y1="8" x2="214.75" y2="10" stroke="#444" stroke-width="0.8"/><line x1="217.12" y1="8" x2="217.12" y2="10" stroke="#444" stroke-width="0.8"/><line x1="219.50" y1="8" x2="219.50" y2="10" stroke="#444" stroke-width="0.8"/><line x1="221.88" y1="6" x2="221.88" y2="10" stroke="#555" stroke-width="1"/><line x1="224.25" y1="8" x2="224.25" y2="10" stroke="#444" stroke-width="0.8"/><line x1="226.62" y1="8" x2="226.62" y2="10" stroke="#444" stroke-width="0.8"/><line x1="229.00" y1="8" x2="229.00" y2="10" stroke="#444" stroke-width="0.8"/><line x1="231.38" y1="8" x2="231.38" y2="10" stroke="#444" stroke-width="0.8"/><line x1="233.75" y1="0" x2="233.75" y2="10" stroke="#6e6e6e" stroke-width="1"/><line x1="236.12" y1="8" x2="236.12" y2="10" stroke="#444" stroke-width="0.8"/><line x1="238.50" y1="8" x2="238.50" y2="10" stroke="#444" stroke-width="0.8"/><line x1="240.88" y1="8" x2="240.88" y2="10" stroke="#444" stroke-width="0.8"/><line x1="243.25" y1="8" x2="243.25" y2="10" stroke="#444" stroke-width="0.8"/><line x1="245.62" y1="6" x2="245.62" y2="10" stroke="#555" stroke-width="1"/><line x1="248.00" y1="8" x2="248.00" y2="10" stroke="#444" stroke-width="0.8"/><line x1="250.38" y1="8" x2="250.38" y2="10" stroke="#444" stroke-width="0.8"/><line x1="252.75" y1="8" x2="252.75" y2="10" stroke="#444" stroke-width="0.8"/><line x1="255.12" y1="8" x2="255.12" y2="10" stroke="#444" stroke-width="0.8"/><line x1="257.50" y1="0" x2="257.50" y2="10" stroke="#6e6e6e" stroke-width="1"/><line x1="259.88" y1="8" x2="259.88" y2="10" stroke="#444" stroke-width="0.8"/><line x1="262.25" y1="8" x2="262.25" y2="10" stroke="#444" stroke-width="0.8"/><line x1="264.62" y1="8" x2="264.62" y2="10" stroke="#444" stroke-width="0.8"/><line x1="267.00" y1="8" x2="267.00" y2="10" stroke="#444" stroke-width="0.8"/><line x1="269.38" y1="6" x2="269.38" y2="10" stroke="#555" stroke-width="1"/><line x1="271.75" y1="8" x2="271.75" y2="10" stroke="#444" stroke-width="0.8"/><line x1="274.12" y1="8" x2="274.12" y2="10" stroke="#444" stroke-width="0.8"/><line x1="276.50" y1="8" x2="276.50" y2="10" stroke="#444" stroke-width="0.8"/><line x1="278.88" y1="8" x2="278.88" y2="10" stroke="#444" stroke-width="0.8"/><line x1="281.25" y1="0" x2="281.25" y2="10" stroke="#6e6e6e" stroke-width="1"/><line x1="283.62" y1="8" x2="283.62" y2="10" stroke="#444" stroke-width="0.8"/><line x1="286.00" y1="8" x2="286.00" y2="10" stroke="#444" stroke-width="0.8"/><line x1="288.38" y1="8" x2="288.38" y2="10" stroke="#444" stroke-width="0.8"/><line x1="290.75" y1="8" x2="290.75" y2="10" stroke="#444" stroke-width="0.8"/><line x1="293.12" y1="6" x2="293.12" y2="10" stroke="#555" stroke-width="1"/><line x1="295.50" y1="8" x2="295.50" y2="10" stroke="#444" stroke-width="0.8"/><line x1="297.88" y1="8" x2="297.88" y2="10" stroke="#444" stroke-width="0.8"/><line x1="300.25" y1="8" x2="300.25" y2="10" stroke="#444" stroke-width="0.8"/><line x1="302.62" y1="8" x2="302.62" y2="10" stroke="#444" stroke-width="0.8"/><line x1="305.00" y1="0" x2="305.00" y2="10" stroke="#6e6e6e" stroke-width="1"/><line x1="307.38" y1="8" x2="307.38" y2="10" stroke="#444" stroke-width="0.8"/><line x1="309.75" y1="8" x2="309.75" y2="10" stroke="#444" stroke-width="0.8"/><line x1="312.12" y1="8" x2="312.12" y2="10" stroke="#444" stroke-width="0.8"/><line x1="314.50" y1="8" x2="314.50" y2="10" stroke="#444" stroke-width="0.8"/><line x1="316.88" y1="6" x2="316.88" y2="10" stroke="#555" stroke-width="1"/><line x1="319.25" y1="8" x2="319.25" y2="10" stroke="#444" stroke-width="0.8"/><line x1="321.62" y1="8" x2="321.62" y2="10" stroke="#444" stroke-width="0.8"/><line x1="324.00" y1="8" x2="324.00" y2="10" stroke="#444" stroke-width="0.8"/><line x1="326.38" y1="8" x2="326.38" y2="10" stroke="#444" stroke-width="0.8"/><line x1="328.75" y1="0" x2="328.75" y2="10" stroke="#6e6e6e" stroke-width="1"/><line x1="331.12" y1="8" x2="331.12" y2="10" stroke="#444" stroke-width="0.8"/><line x1="333.50" y1="8" x2="333.50" y2="10" stroke="#444" stroke-width="0.8"/><line x1="335.88" y1="8" x2="335.88" y2="10" stroke="#444" stroke-width="0.8"/><line x1="338.25" y1="8" x2="338.25" y2="10" stroke="#444" stroke-width="0.8"/><line x1="340.62" y1="6" x2="340.62" y2="10" stroke="#555" stroke-width="1"/><line x1="343.00" y1="8" x2="343.00" y2="10" stroke="#444" stroke-width="0.8"/><line x1="345.38" y1="8" x2="345.38" y2="10" stroke="#444" stroke-width="0.8"/><line x1="347.75" y1="8" x2="347.75" y2="10" stroke="#444" stroke-width="0.8"/><line x1="350.12" y1="8" x2="350.12" y2="10" stroke="#444" stroke-width="0.8"/><line x1="352.50" y1="0" x2="352.50" y2="10" stroke="#6e6e6e" stroke-width="1"/><line x1="354.88" y1="8" x2="354.88" y2="10" stroke="#444" stroke-width="0.8"/><line x1="357.25" y1="8" x2="357.25" y2="10" stroke="#444" stroke-width="0.8"/><line x1="359.62" y1="8" x2="359.62" y2="10" stroke="#444" stroke-width="0.8"/><line x1="362.00" y1="8" x2="362.00" y2="10" stroke="#444" stroke-width="0.8"/><line x1="364.38" y1="6" x2="364.38" y2="10" stroke="#555" stroke-width="1"/><line x1="366.75" y1="8" x2="366.75" y2="10" stroke="#444" stroke-width="0.8"/><line x1="369.12" y1="8" x2="369.12" y2="10" stroke="#444" stroke-width="0.8"/><line x1="371.50" y1="8" x2="371.50" y2="10" stroke="#444" stroke-width="0.8"/><line x1="373.88" y1="8" x2="373.88" y2="10" stroke="#444" stroke-width="0.8"/><line x1="376.25" y1="0" x2="376.25" y2="10" stroke="#6e6e6e" stroke-width="1"/><line x1="378.62" y1="8" x2="378.62" y2="10" stroke="#444" stroke-width="0.8"/><line x1="381.00" y1="8" x2="381.00" y2="10" stroke="#444" stroke-width="0.8"/><line x1="383.38" y1="8" x2="383.38" y2="10" stroke="#444" stroke-width="0.8"/><line x1="385.75" y1="8" x2="385.75" y2="10" stroke="#444" stroke-width="0.8"/><line x1="388.12" y1="6" x2="388.12" y2="10" stroke="#555" stroke-width="1"/><line x1="390.50" y1="8" x2="390.50" y2="10" stroke="#444" stroke-width="0.8"/><line x1="392.88" y1="8" x2="392.88" y2="10" stroke="#444" stroke-width="0.8"/><line x1="395.25" y1="8" x2="395.25" y2="10" stroke="#444" stroke-width="0.8"/><line x1="397.62" y1="8" x2="397.62" y2="10" stroke="#444" stroke-width="0.8"/><line x1="400.00" y1="0" x2="400.00" y2="10" stroke="#6e6e6e" stroke-width="1"/><line x1="402.38" y1="8" x2="402.38" y2="10" stroke="#444" stroke-width="0.8"/><line x1="404.75" y1="8" x2="404.75" y2="10" stroke="#444" stroke-width="0.8"/><line x1="407.12" y1="8" x2="407.12" y2="10" stroke="#444" stroke-width="0.8"/><line x1="409.50" y1="8" x2="409.50" y2="10" stroke="#444" stroke-width="0.8"/><line x1="411.88" y1="6" x2="411.88" y2="10" stroke="#555" stroke-width="1"/><line x1="414.25" y1="8" x2="414.25" y2="10" stroke="#444" stroke-width="0.8"/><line x1="416.62" y1="8" x2="416.62" y2="10" stroke="#444" stroke-width="0.8"/><line x1="419.00" y1="8" x2="419.00" y2="10" stroke="#444" stroke-width="0.8"/><line x1="421.38" y1="8" x2="421.38" y2="10" stroke="#444" stroke-width="0.8"/><line x1="423.75" y1="0" x2="423.75" y2="10" stroke="#6e6e6e" stroke-width="1"/><line x1="426.12" y1="8" x2="426.12" y2="10" stroke="#444" stroke-width="0.8"/><line x1="428.50" y1="8" x2="428.50" y2="10" stroke="#444" stroke-width="0.8"/><line x1="430.88" y1="8" x2="430.88" y2="10" stroke="#444" stroke-width="0.8"/><line x1="433.25" y1="8" x2="433.25" y2="10" stroke="#444" stroke-width="0.8"/><line x1="435.62" y1="6" x2="435.62" y2="10" stroke="#555" stroke-width="1"/><line x1="438.00" y1="8" x2="438.00" y2="10" stroke="#444" stroke-width="0.8"/><line x1="440.38" y1="8" x2="440.38" y2="10" stroke="#444" stroke-width="0.8"/><line x1="442.75" y1="8" x2="442.75" y2="10" stroke="#444" stroke-width="0.8"/><line x1="445.12" y1="8" x2="445.12" y2="10" stroke="#444" stroke-width="0.8"/><line x1="447.50" y1="0" x2="447.50" y2="10" stroke="#6e6e6e" stroke-width="1"/><line x1="449.88" y1="8" x2="449.88" y2="10" stroke="#444" stroke-width="0.8"/><line x1="452.25" y1="8" x2="452.25" y2="10" stroke="#444" stroke-width="0.8"/><line x1="454.62" y1="8" x2="454.62" y2="10" stroke="#444" stroke-width="0.8"/><line x1="457.00" y1="8" x2="457.00" y2="10" stroke="#444" stroke-width="0.8"/><line x1="459.38" y1="6" x2="459.38" y2="10" stroke="#555" stroke-width="1"/><line x1="461.75" y1="8" x2="461.75" y2="10" stroke="#444" stroke-width="0.8"/><line x1="464.12" y1="8" x2="464.12" y2="10" stroke="#444" stroke-width="0.8"/><line x1="466.50" y1="8" x2="466.50" y2="10" stroke="#444" stroke-width="0.8"/><line x1="468.88" y1="8" x2="468.88" y2="10" stroke="#444" stroke-width="0.8"/><line x1="471.25" y1="0" x2="471.25" y2="10" stroke="#6e6e6e" stroke-width="1"/><line x1="473.62" y1="8" x2="473.62" y2="10" stroke="#444" stroke-width="0.8"/><line x1="476.00" y1="8" x2="476.00" y2="10" stroke="#444" stroke-width="0.8"/><line x1="478.38" y1="8" x2="478.38" y2="10" stroke="#444" stroke-width="0.8"/><line x1="480.75" y1="8" x2="480.75" y2="10" stroke="#444" stroke-width="0.8"/><line x1="483.12" y1="6" x2="483.12" y2="10" stroke="#555" stroke-width="1"/><line x1="485.50" y1="8" x2="485.50" y2="10" stroke="#444" stroke-width="0.8"/><line x1="487.88" y1="8" x2="487.88" y2="10" stroke="#444" stroke-width="0.8"/><line x1="490.25" y1="8" x2="490.25" y2="10" stroke="#444" stroke-width="0.8"/><line x1="492.62" y1="8" x2="492.62" y2="10" stroke="#444" stroke-width="0.8"/><line x1="495.00" y1="0" x2="495.00" y2="10" stroke="#6e6e6e" stroke-width="1"/><line x1="497.38" y1="8" x2="497.38" y2="10" stroke="#444" stroke-width="0.8"/><line x1="499.75" y1="8" x2="499.75" y2="10" stroke="#444" stroke-width="0.8"/><line x1="502.12" y1="8" x2="502.12" y2="10" stroke="#444" stroke-width="0.8"/><line x1="504.50" y1="8" x2="504.50" y2="10" stroke="#444" stroke-width="0.8"/><line x1="506.88" y1="6" x2="506.88" y2="10" stroke="#555" stroke-width="1"/><line x1="509.25" y1="8" x2="509.25" y2="10" stroke="#444" stroke-width="0.8"/><line x1="511.62" y1="8" x2="511.62" y2="10" stroke="#444" stroke-width="0.8"/><line x1="514.00" y1="8" x2="514.00" y2="10" stroke="#444" stroke-width="0.8"/><line x1="516.38" y1="8" x2="516.38" y2="10" stroke="#444" stroke-width="0.8"/><line x1="518.75" y1="0" x2="518.75" y2="10" stroke="#6e6e6e" stroke-width="1"/><line x1="521.12" y1="8" x2="521.12" y2="10" stroke="#444" stroke-width="0.8"/><line x1="523.50" y1="8" x2="523.50" y2="10" stroke="#444" stroke-width="0.8"/><line x1="525.88" y1="8" x2="525.88" y2="10" stroke="#444" stroke-width="0.8"/><line x1="528.25" y1="8" x2="528.25" y2="10" stroke="#444" stroke-width="0.8"/><line x1="530.62" y1="6" x2="530.62" y2="10" stroke="#555" stroke-width="1"/><line x1="533.00" y1="8" x2="533.00" y2="10" stroke="#444" stroke-width="0.8"/><line x1="535.38" y1="8" x2="535.38" y2="10" stroke="#444" stroke-width="0.8"/><line x1="537.75" y1="8" x2="537.75" y2="10" stroke="#444" stroke-width="0.8"/><line x1="540.12" y1="8" x2="540.12" y2="10" stroke="#444" stroke-width="0.8"/><line x1="542.50" y1="0" x2="542.50" y2="10" stroke="#6e6e6e" stroke-width="1"/><line x1="544.88" y1="8" x2="544.88" y2="10" stroke="#444" stroke-width="0.8"/><line x1="547.25" y1="8" x2="547.25" y2="10" stroke="#444" stroke-width="0.8"/><line x1="549.62" y1="8" x2="549.62" y2="10" stroke="#444" stroke-width="0.8"/><line x1="552.00" y1="8" x2="552.00" y2="10" stroke="#444" stroke-width="0.8"/><line x1="554.38" y1="6" x2="554.38" y2="10" stroke="#555" stroke-width="1"/><line x1="556.75" y1="8" x2="556.75" y2="10" stroke="#444" stroke-width="0.8"/><line x1="559.12" y1="8" x2="559.12" y2="10" stroke="#444" stroke-width="0.8"/><line x1="561.50" y1="8" x2="561.50" y2="10" stroke="#444" stroke-width="0.8"/><line x1="563.88" y1="8" x2="563.88" y2="10" stroke="#444" stroke-width="0.8"/><line x1="566.25" y1="0" x2="566.25" y2="10" stroke="#6e6e6e" stroke-width="1"/><line x1="568.62" y1="8" x2="568.62" y2="10" stroke="#444" stroke-width="0.8"/><line x1="571.00" y1="8" x2="571.00" y2="10" stroke="#444" stroke-width="0.8"/><line x1="573.38" y1="8" x2="573.38" y2="10" stroke="#444" stroke-width="0.8"/><line x1="575.75" y1="8" x2="575.75" y2="10" stroke="#444" stroke-width="0.8"/><line x1="578.12" y1="6" x2="578.12" y2="10" stroke="#555" stroke-width="1"/><line x1="580.50" y1="8" x2="580.50" y2="10" stroke="#444" stroke-width="0.8"/><line x1="582.88" y1="8" x2="582.88" y2="10" stroke="#444" stroke-width="0.8"/><line x1="585.25" y1="8" x2="585.25" y2="10" stroke="#444" stroke-width="0.8"/><line x1="587.62" y1="8" x2="587.62" y2="10" stroke="#444" stroke-width="0.8"/><line x1="590.00" y1="0" x2="590.00" y2="10" stroke="#6e6e6e" stroke-width="1"/><line x1="592.38" y1="8" x2="592.38" y2="10" stroke="#444" stroke-width="0.8"/><line x1="594.75" y1="8" x2="594.75" y2="10" stroke="#444" stroke-width="0.8"/><line x1="597.12" y1="8" x2="597.12" y2="10" stroke="#444" stroke-width="0.8"/><line x1="599.50" y1="8" x2="599.50" y2="10" stroke="#444" stroke-width="0.8"/><line x1="601.88" y1="6" x2="601.88" y2="10" stroke="#555" stroke-width="1"/><line x1="604.25" y1="8" x2="604.25" y2="10" stroke="#444" stroke-width="0.8"/><line x1="606.62" y1="8" x2="606.62" y2="10" stroke="#444" stroke-width="0.8"/><line x1="609.00" y1="8" x2="609.00" y2="10" stroke="#444" stroke-width="0.8"/><line x1="611.38" y1="8" x2="611.38" y2="10" stroke="#444" stroke-width="0.8"/><line x1="613.75" y1="0" x2="613.75" y2="10" stroke="#6e6e6e" stroke-width="1"/><line x1="616.12" y1="8" x2="616.12" y2="10" stroke="#444" stroke-width="0.8"/><line x1="618.50" y1="8" x2="618.50" y2="10" stroke="#444" stroke-width="0.8"/><line x1="620.88" y1="8" x2="620.88" y2="10" stroke="#444" stroke-width="0.8"/><line x1="623.25" y1="8" x2="623.25" y2="10" stroke="#444" stroke-width="0.8"/><line x1="625.62" y1="6" x2="625.62" y2="10" stroke="#555" stroke-width="1"/><line x1="628.00" y1="8" x2="628.00" y2="10" stroke="#444" stroke-width="0.8"/><line x1="630.38" y1="8" x2="630.38" y2="10" stroke="#444" stroke-width="0.8"/><line x1="632.75" y1="8" x2="632.75" y2="10" stroke="#444" stroke-width="0.8"/><line x1="635.12" y1="8" x2="635.12" y2="10" stroke="#444" stroke-width="0.8"/><line x1="637.50" y1="0" x2="637.50" y2="10" stroke="#6e6e6e" stroke-width="1"/><line x1="639.88" y1="8" x2="639.88" y2="10" stroke="#444" stroke-width="0.8"/><line x1="642.25" y1="8" x2="642.25" y2="10" stroke="#444" stroke-width="0.8"/><line x1="644.62" y1="8" x2="644.62" y2="10" stroke="#444" stroke-width="0.8"/><line x1="647.00" y1="8" x2="647.00" y2="10" stroke="#444" stroke-width="0.8"/><line x1="649.38" y1="6" x2="649.38" y2="10" stroke="#555" stroke-width="1"/><line x1="651.75" y1="8" x2="651.75" y2="10" stroke="#444" stroke-width="0.8"/><line x1="654.12" y1="8" x2="654.12" y2="10" stroke="#444" stroke-width="0.8"/><line x1="656.50" y1="8" x2="656.50" y2="10" stroke="#444" stroke-width="0.8"/><line x1="658.88" y1="8" x2="658.88" y2="10" stroke="#444" stroke-width="0.8"/><line x1="661.25" y1="0" x2="661.25" y2="10" stroke="#6e6e6e" stroke-width="1"/><line x1="663.62" y1="8" x2="663.62" y2="10" stroke="#444" stroke-width="0.8"/><line x1="666.00" y1="8" x2="666.00" y2="10" stroke="#444" stroke-width="0.8"/><line x1="668.38" y1="8" x2="668.38" y2="10" stroke="#444" stroke-width="0.8"/><line x1="670.75" y1="8" x2="670.75" y2="10" stroke="#444" stroke-width="0.8"/><line x1="673.12" y1="6" x2="673.12" y2="10" stroke="#555" stroke-width="1"/><line x1="675.50" y1="8" x2="675.50" y2="10" stroke="#444" stroke-width="0.8"/><line x1="677.88" y1="8" x2="677.88" y2="10" stroke="#444" stroke-width="0.8"/><line x1="680.25" y1="8" x2="680.25" y2="10" stroke="#444" stroke-width="0.8"/><line x1="682.62" y1="8" x2="682.62" y2="10" stroke="#444" stroke-width="0.8"/><line x1="685.00" y1="0" x2="685.00" y2="10" stroke="#6e6e6e" stroke-width="1"/><line x1="687.38" y1="8" x2="687.38" y2="10" stroke="#444" stroke-width="0.8"/><line x1="689.75" y1="8" x2="689.75" y2="10" stroke="#444" stroke-width="0.8"/><line x1="692.12" y1="8" x2="692.12" y2="10" stroke="#444" stroke-width="0.8"/><line x1="694.50" y1="8" x2="694.50" y2="10" stroke="#444" stroke-width="0.8"/><line x1="696.88" y1="6" x2="696.88" y2="10" stroke="#555" stroke-width="1"/><line x1="699.25" y1="8" x2="699.25" y2="10" stroke="#444" stroke-width="0.8"/><line x1="701.62" y1="8" x2="701.62" y2="10" stroke="#444" stroke-width="0.8"/><line x1="704.00" y1="8" x2="704.00" y2="10" stroke="#444" stroke-width="0.8"/><line x1="706.38" y1="8" x2="706.38" y2="10" stroke="#444" stroke-width="0.8"/><line x1="708.75" y1="0" x2="708.75" y2="10" stroke="#6e6e6e" stroke-width="1"/><line x1="711.12" y1="8" x2="711.12" y2="10" stroke="#444" stroke-width="0.8"/><line x1="713.50" y1="8" x2="713.50" y2="10" stroke="#444" stroke-width="0.8"/><line x1="715.88" y1="8" x2="715.88" y2="10" stroke="#444" stroke-width="0.8"/><line x1="718.25" y1="8" x2="718.25" y2="10" stroke="#444" stroke-width="0.8"/><line x1="720.62" y1="6" x2="720.62" y2="10" stroke="#555" stroke-width="1"/><line x1="723.00" y1="8" x2="723.00" y2="10" stroke="#444" stroke-width="0.8"/><line x1="725.38" y1="8" x2="725.38" y2="10" stroke="#444" stroke-width="0.8"/><line x1="727.75" y1="8" x2="727.75" y2="10" stroke="#444" stroke-width="0.8"/><line x1="730.12" y1="8" x2="730.12" y2="10" stroke="#444" stroke-width="0.8"/><line x1="732.50" y1="0" x2="732.50" y2="10" stroke="#6e6e6e" stroke-width="1"/><line x1="734.88" y1="8" x2="734.88" y2="10" stroke="#444" stroke-width="0.8"/><line x1="737.25" y1="8" x2="737.25" y2="10" stroke="#444" stroke-width="0.8"/><line x1="739.62" y1="8" x2="739.62" y2="10" stroke="#444" stroke-width="0.8"/><line x1="742.00" y1="8" x2="742.00" y2="10" stroke="#444" stroke-width="0.8"/></svg>
<div class="t" id="t33" style="left:48.8px;top:82.1px;font-size:7px;color:#dcdcdc;font-family:'Liberation Sans',sans-serif;">20</div>
<div class="t" id="t34" style="left:72.55px;top:82.1px;font-size:7px;color:#dcdcdc;font-family:'Liberation Sans',sans-serif;">10</div>
<div class="t" id="t35" style="left:96.3px;top:82.1px;font-size:7px;color:#dcdcdc;font-family:'Liberation Sans',sans-serif;">0</div>
<div class="t" id="t36" style="left:120.05px;top:82.1px;font-size:7px;color:#dcdcdc;font-family:'Liberation Sans',sans-serif;">10</div>
<div class="t" id="t37" style="left:143.8px;top:82.1px;font-size:7px;color:#dcdcdc;font-family:'Liberation Sans',sans-serif;">20</div>
<div class="t" id="t38" style="left:167.55px;top:82.1px;font-size:7px;color:#dcdcdc;font-family:'Liberation Sans',sans-serif;">30</div>
<div class="t" id="t39" style="left:191.3px;top:82.1px;font-size:7px;color:#dcdcdc;font-family:'Liberation Sans',sans-serif;">40</div>
<div class="t" id="t40" style="left:215.05px;top:82.1px;font-size:7px;color:#dcdcdc;font-family:'Liberation Sans',sans-serif;">50</div>
<div class="t" id="t41" style="left:238.8px;top:82.1px;font-size:7px;color:#dcdcdc;font-family:'Liberation Sans',sans-serif;">60</div>
<div class="t" id="t42" style="left:262.55px;top:82.1px;font-size:7px;color:#dcdcdc;font-family:'Liberation Sans',sans-serif;">70</div>
<div class="t" id="t43" style="left:286.3px;top:82.1px;font-size:7px;color:#dcdcdc;font-family:'Liberation Sans',sans-serif;">80</div>
<div class="t" id="t44" style="left:310.05px;top:82.1px;font-size:7px;color:#dcdcdc;font-family:'Liberation Sans',sans-serif;">90</div>
<div class="t" id="t45" style="left:333.8px;top:82.1px;font-size:7px;color:#dcdcdc;font-family:'Liberation Sans',sans-serif;">100</div>
<div class="t" id="t46" style="left:357.55px;top:82.1px;font-size:7px;color:#dcdcdc;font-family:'Liberation Sans',sans-serif;">110</div>
<div class="t" id="t47" style="left:381.3px;top:82.1px;font-size:7px;color:#dcdcdc;font-family:'Liberation Sans',sans-serif;">120</div>
<div class="t" id="t48" style="left:405.05px;top:82.1px;font-size:7px;color:#dcdcdc;font-family:'Liberation Sans',sans-serif;">130</div>
<div class="t" id="t49" style="left:428.8px;top:82.1px;font-size:7px;color:#dcdcdc;font-family:'Liberation Sans',sans-serif;">140</div>
<div class="t" id="t50" style="left:452.55px;top:82.1px;font-size:7px;color:#dcdcdc;font-family:'Liberation Sans',sans-serif;">150</div>
<div class="t" id="t51" style="left:476.3px;top:82.1px;font-size:7px;color:#dcdcdc;font-family:'Liberation Sans',sans-serif;">160</div>
<div class="t" id="t52" style="left:500.05px;top:82.1px;font-size:7px;color:#dcdcdc;font-family:'Liberation Sans',sans-serif;">170</div>
<div class="t" id="t53" style="left:523.8px;top:82.1px;font-size:7px;color:#dcdcdc;font-family:'Liberation Sans',sans-serif;">180</div>
<div class="t" id="t54" style="left:547.55px;top:82.1px;font-size:7px;color:#dcdcdc;font-family:'Liberation Sans',sans-serif;">190</div>
<div class="t" id="t55" style="left:571.3px;top:82.1px;font-size:7px;color:#dcdcdc;font-family:'Liberation Sans',sans-serif;">200</div>
<div class="t" id="t56" style="left:595.05px;top:82.1px;font-size:7px;color:#dcdcdc;font-family:'Liberation Sans',sans-serif;">210</div>
<div class="t" id="t57" style="left:618.8px;top:82.1px;font-size:7px;color:#dcdcdc;font-family:'Liberation Sans',sans-serif;">220</div>
<div class="t" id="t58" style="left:642.55px;top:82.1px;font-size:7px;color:#dcdcdc;font-family:'Liberation Sans',sans-serif;">230</div>
<div class="t" id="t59" style="left:666.3px;top:82.1px;font-size:7px;color:#dcdcdc;font-family:'Liberation Sans',sans-serif;">240</div>
<div class="t" id="t60" style="left:690.05px;top:82.1px;font-size:7px;color:#dcdcdc;font-family:'Liberation Sans',sans-serif;">250</div>
<div class="t" id="t61" style="left:713.8px;top:82.1px;font-size:7px;color:#dcdcdc;font-family:'Liberation Sans',sans-serif;">260</div>
<div class="t" id="t62" style="left:737.55px;top:82.1px;font-size:7px;color:#dcdcdc;font-family:'Liberation Sans',sans-serif;">270</div>
<div class="t" id="t63" style="left:761.3px;top:82.1px;font-size:7px;color:#dcdcdc;font-family:'Liberation Sans',sans-serif;">280</div>
<svg class="a" style="left:27px;top:91px;" width="11" height="401" viewBox="0 0 11 401"><line x1="9" y1="2.12" x2="11" y2="2.12" stroke="#444" stroke-width="0.8"/><line x1="9" y1="4.50" x2="11" y2="4.50" stroke="#444" stroke-width="0.8"/><line x1="9" y1="6.88" x2="11" y2="6.88" stroke="#444" stroke-width="0.8"/><line x1="9" y1="9.25" x2="11" y2="9.25" stroke="#444" stroke-width="0.8"/><line x1="6" y1="11.62" x2="11" y2="11.62" stroke="#555" stroke-width="1"/><line x1="9" y1="14.00" x2="11" y2="14.00" stroke="#444" stroke-width="0.8"/><line x1="9" y1="16.38" x2="11" y2="16.38" stroke="#444" stroke-width="0.8"/><line x1="9" y1="18.75" x2="11" y2="18.75" stroke="#444" stroke-width="0.8"/><line x1="9" y1="21.12" x2="11" y2="21.12" stroke="#444" stroke-width="0.8"/><line x1="0" y1="23.50" x2="11" y2="23.50" stroke="#505050" stroke-width="1"/><line x1="9" y1="25.88" x2="11" y2="25.88" stroke="#444" stroke-width="0.8"/><line x1="9" y1="28.25" x2="11" y2="28.25" stroke="#444" stroke-width="0.8"/><line x1="9" y1="30.62" x2="11" y2="30.62" stroke="#444" stroke-width="0.8"/><line x1="9" y1="33.00" x2="11" y2="33.00" stroke="#444" stroke-width="0.8"/><line x1="6" y1="35.38" x2="11" y2="35.38" stroke="#555" stroke-width="1"/><line x1="9" y1="37.75" x2="11" y2="37.75" stroke="#444" stroke-width="0.8"/><line x1="9" y1="40.12" x2="11" y2="40.12" stroke="#444" stroke-width="0.8"/><line x1="9" y1="42.50" x2="11" y2="42.50" stroke="#444" stroke-width="0.8"/><line x1="9" y1="44.88" x2="11" y2="44.88" stroke="#444" stroke-width="0.8"/><line x1="0" y1="47.25" x2="11" y2="47.25" stroke="#505050" stroke-width="1"/><line x1="9" y1="49.62" x2="11" y2="49.62" stroke="#444" stroke-width="0.8"/><line x1="9" y1="52.00" x2="11" y2="52.00" stroke="#444" stroke-width="0.8"/><line x1="9" y1="54.38" x2="11" y2="54.38" stroke="#444" stroke-width="0.8"/><line x1="9" y1="56.75" x2="11" y2="56.75" stroke="#444" stroke-width="0.8"/><line x1="6" y1="59.12" x2="11" y2="59.12" stroke="#555" stroke-width="1"/><line x1="9" y1="61.50" x2="11" y2="61.50" stroke="#444" stroke-width="0.8"/><line x1="9" y1="63.88" x2="11" y2="63.88" stroke="#444" stroke-width="0.8"/><line x1="9" y1="66.25" x2="11" y2="66.25" stroke="#444" stroke-width="0.8"/><line x1="9" y1="68.62" x2="11" y2="68.62" stroke="#444" stroke-width="0.8"/><line x1="0" y1="71.00" x2="11" y2="71.00" stroke="#505050" stroke-width="1"/><line x1="9" y1="73.38" x2="11" y2="73.38" stroke="#444" stroke-width="0.8"/><line x1="9" y1="75.75" x2="11" y2="75.75" stroke="#444" stroke-width="0.8"/><line x1="9" y1="78.12" x2="11" y2="78.12" stroke="#444" stroke-width="0.8"/><line x1="9" y1="80.50" x2="11" y2="80.50" stroke="#444" stroke-width="0.8"/><line x1="6" y1="82.88" x2="11" y2="82.88" stroke="#555" stroke-width="1"/><line x1="9" y1="85.25" x2="11" y2="85.25" stroke="#444" stroke-width="0.8"/><line x1="9" y1="87.62" x2="11" y2="87.62" stroke="#444" stroke-width="0.8"/><line x1="9" y1="90.00" x2="11" y2="90.00" stroke="#444" stroke-width="0.8"/><line x1="9" y1="92.38" x2="11" y2="92.38" stroke="#444" stroke-width="0.8"/><line x1="0" y1="94.75" x2="11" y2="94.75" stroke="#505050" stroke-width="1"/><line x1="9" y1="97.12" x2="11" y2="97.12" stroke="#444" stroke-width="0.8"/><line x1="9" y1="99.50" x2="11" y2="99.50" stroke="#444" stroke-width="0.8"/><line x1="9" y1="101.88" x2="11" y2="101.88" stroke="#444" stroke-width="0.8"/><line x1="9" y1="104.25" x2="11" y2="104.25" stroke="#444" stroke-width="0.8"/><line x1="6" y1="106.62" x2="11" y2="106.62" stroke="#555" stroke-width="1"/><line x1="9" y1="109.00" x2="11" y2="109.00" stroke="#444" stroke-width="0.8"/><line x1="9" y1="111.38" x2="11" y2="111.38" stroke="#444" stroke-width="0.8"/><line x1="9" y1="113.75" x2="11" y2="113.75" stroke="#444" stroke-width="0.8"/><line x1="9" y1="116.12" x2="11" y2="116.12" stroke="#444" stroke-width="0.8"/><line x1="0" y1="118.50" x2="11" y2="118.50" stroke="#505050" stroke-width="1"/><line x1="9" y1="120.88" x2="11" y2="120.88" stroke="#444" stroke-width="0.8"/><line x1="9" y1="123.25" x2="11" y2="123.25" stroke="#444" stroke-width="0.8"/><line x1="9" y1="125.62" x2="11" y2="125.62" stroke="#444" stroke-width="0.8"/><line x1="9" y1="128.00" x2="11" y2="128.00" stroke="#444" stroke-width="0.8"/><line x1="6" y1="130.38" x2="11" y2="130.38" stroke="#555" stroke-width="1"/><line x1="9" y1="132.75" x2="11" y2="132.75" stroke="#444" stroke-width="0.8"/><line x1="9" y1="135.12" x2="11" y2="135.12" stroke="#444" stroke-width="0.8"/><line x1="9" y1="137.50" x2="11" y2="137.50" stroke="#444" stroke-width="0.8"/><line x1="9" y1="139.88" x2="11" y2="139.88" stroke="#444" stroke-width="0.8"/><line x1="0" y1="142.25" x2="11" y2="142.25" stroke="#505050" stroke-width="1"/><line x1="9" y1="144.62" x2="11" y2="144.62" stroke="#444" stroke-width="0.8"/><line x1="9" y1="147.00" x2="11" y2="147.00" stroke="#444" stroke-width="0.8"/><line x1="9" y1="149.38" x2="11" y2="149.38" stroke="#444" stroke-width="0.8"/><line x1="9" y1="151.75" x2="11" y2="151.75" stroke="#444" stroke-width="0.8"/><line x1="6" y1="154.12" x2="11" y2="154.12" stroke="#555" stroke-width="1"/><line x1="9" y1="156.50" x2="11" y2="156.50" stroke="#444" stroke-width="0.8"/><line x1="9" y1="158.88" x2="11" y2="158.88" stroke="#444" stroke-width="0.8"/><line x1="9" y1="161.25" x2="11" y2="161.25" stroke="#444" stroke-width="0.8"/><line x1="9" y1="163.62" x2="11" y2="163.62" stroke="#444" stroke-width="0.8"/><line x1="0" y1="166.00" x2="11" y2="166.00" stroke="#505050" stroke-width="1"/><line x1="9" y1="168.38" x2="11" y2="168.38" stroke="#444" stroke-width="0.8"/><line x1="9" y1="170.75" x2="11" y2="170.75" stroke="#444" stroke-width="0.8"/><line x1="9" y1="173.12" x2="11" y2="173.12" stroke="#444" stroke-width="0.8"/><line x1="9" y1="175.50" x2="11" y2="175.50" stroke="#444" stroke-width="0.8"/><line x1="6" y1="177.88" x2="11" y2="177.88" stroke="#555" stroke-width="1"/><line x1="9" y1="180.25" x2="11" y2="180.25" stroke="#444" stroke-width="0.8"/><line x1="9" y1="182.62" x2="11" y2="182.62" stroke="#444" stroke-width="0.8"/><line x1="9" y1="185.00" x2="11" y2="185.00" stroke="#444" stroke-width="0.8"/><line x1="9" y1="187.38" x2="11" y2="187.38" stroke="#444" stroke-width="0.8"/><line x1="0" y1="189.75" x2="11" y2="189.75" stroke="#505050" stroke-width="1"/><line x1="9" y1="192.12" x2="11" y2="192.12" stroke="#444" stroke-width="0.8"/><line x1="9" y1="194.50" x2="11" y2="194.50" stroke="#444" stroke-width="0.8"/><line x1="9" y1="196.88" x2="11" y2="196.88" stroke="#444" stroke-width="0.8"/><line x1="9" y1="199.25" x2="11" y2="199.25" stroke="#444" stroke-width="0.8"/><line x1="6" y1="201.62" x2="11" y2="201.62" stroke="#555" stroke-width="1"/><line x1="9" y1="204.00" x2="11" y2="204.00" stroke="#444" stroke-width="0.8"/><line x1="9" y1="206.38" x2="11" y2="206.38" stroke="#444" stroke-width="0.8"/><line x1="9" y1="208.75" x2="11" y2="208.75" stroke="#444" stroke-width="0.8"/><line x1="9" y1="211.12" x2="11" y2="211.12" stroke="#444" stroke-width="0.8"/><line x1="0" y1="213.50" x2="11" y2="213.50" stroke="#505050" stroke-width="1"/><line x1="9" y1="215.88" x2="11" y2="215.88" stroke="#444" stroke-width="0.8"/><line x1="9" y1="218.25" x2="11" y2="218.25" stroke="#444" stroke-width="0.8"/><line x1="9" y1="220.62" x2="11" y2="220.62" stroke="#444" stroke-width="0.8"/><line x1="9" y1="223.00" x2="11" y2="223.00" stroke="#444" stroke-width="0.8"/><line x1="6" y1="225.38" x2="11" y2="225.38" stroke="#555" stroke-width="1"/><line x1="9" y1="227.75" x2="11" y2="227.75" stroke="#444" stroke-width="0.8"/><line x1="9" y1="230.12" x2="11" y2="230.12" stroke="#444" stroke-width="0.8"/><line x1="9" y1="232.50" x2="11" y2="232.50" stroke="#444" stroke-width="0.8"/><line x1="9" y1="234.88" x2="11" y2="234.88" stroke="#444" stroke-width="0.8"/><line x1="0" y1="237.25" x2="11" y2="237.25" stroke="#505050" stroke-width="1"/><line x1="9" y1="239.62" x2="11" y2="239.62" stroke="#444" stroke-width="0.8"/><line x1="9" y1="242.00" x2="11" y2="242.00" stroke="#444" stroke-width="0.8"/><line x1="9" y1="244.38" x2="11" y2="244.38" stroke="#444" stroke-width="0.8"/><line x1="9" y1="246.75" x2="11" y2="246.75" stroke="#444" stroke-width="0.8"/><line x1="6" y1="249.12" x2="11" y2="249.12" stroke="#555" stroke-width="1"/><line x1="9" y1="251.50" x2="11" y2="251.50" stroke="#444" stroke-width="0.8"/><line x1="9" y1="253.88" x2="11" y2="253.88" stroke="#444" stroke-width="0.8"/><line x1="9" y1="256.25" x2="11" y2="256.25" stroke="#444" stroke-width="0.8"/><line x1="9" y1="258.62" x2="11" y2="258.62" stroke="#444" stroke-width="0.8"/><line x1="0" y1="261.00" x2="11" y2="261.00" stroke="#505050" stroke-width="1"/><line x1="9" y1="263.38" x2="11" y2="263.38" stroke="#444" stroke-width="0.8"/><line x1="9" y1="265.75" x2="11" y2="265.75" stroke="#444" stroke-width="0.8"/><line x1="9" y1="268.12" x2="11" y2="268.12" stroke="#444" stroke-width="0.8"/><line x1="9" y1="270.50" x2="11" y2="270.50" stroke="#444" stroke-width="0.8"/><line x1="6" y1="272.88" x2="11" y2="272.88" stroke="#555" stroke-width="1"/><line x1="9" y1="275.25" x2="11" y2="275.25" stroke="#444" stroke-width="0.8"/><line x1="9" y1="277.62" x2="11" y2="277.62" stroke="#444" stroke-width="0.8"/><line x1="9" y1="280.00" x2="11" y2="280.00" stroke="#444" stroke-width="0.8"/><line x1="9" y1="282.38" x2="11" y2="282.38" stroke="#444" stroke-width="0.8"/><line x1="0" y1="284.75" x2="11" y2="284.75" stroke="#505050" stroke-width="1"/><line x1="9" y1="287.12" x2="11" y2="287.12" stroke="#444" stroke-width="0.8"/><line x1="9" y1="289.50" x2="11" y2="289.50" stroke="#444" stroke-width="0.8"/><line x1="9" y1="291.88" x2="11" y2="291.88" stroke="#444" stroke-width="0.8"/><line x1="9" y1="294.25" x2="11" y2="294.25" stroke="#444" stroke-width="0.8"/><line x1="6" y1="296.62" x2="11" y2="296.62" stroke="#555" stroke-width="1"/><line x1="9" y1="299.00" x2="11" y2="299.00" stroke="#444" stroke-width="0.8"/><line x1="9" y1="301.38" x2="11" y2="301.38" stroke="#444" stroke-width="0.8"/><line x1="9" y1="303.75" x2="11" y2="303.75" stroke="#444" stroke-width="0.8"/><line x1="9" y1="306.12" x2="11" y2="306.12" stroke="#444" stroke-width="0.8"/><line x1="0" y1="308.50" x2="11" y2="308.50" stroke="#505050" stroke-width="1"/><line x1="9" y1="310.88" x2="11" y2="310.88" stroke="#444" stroke-width="0.8"/><line x1="9" y1="313.25" x2="11" y2="313.25" stroke="#444" stroke-width="0.8"/><line x1="9" y1="315.62" x2="11" y2="315.62" stroke="#444" stroke-width="0.8"/><line x1="9" y1="318.00" x2="11" y2="318.00" stroke="#444" stroke-width="0.8"/><line x1="6" y1="320.38" x2="11" y2="320.38" stroke="#555" stroke-width="1"/><line x1="9" y1="322.75" x2="11" y2="322.75" stroke="#444" stroke-width="0.8"/><line x1="9" y1="325.12" x2="11" y2="325.12" stroke="#444" stroke-width="0.8"/><line x1="9" y1="327.50" x2="11" y2="327.50" stroke="#444" stroke-width="0.8"/><line x1="9" y1="329.88" x2="11" y2="329.88" stroke="#444" stroke-width="0.8"/><line x1="0" y1="332.25" x2="11" y2="332.25" stroke="#505050" stroke-width="1"/><line x1="9" y1="334.62" x2="11" y2="334.62" stroke="#444" stroke-width="0.8"/><line x1="9" y1="337.00" x2="11" y2="337.00" stroke="#444" stroke-width="0.8"/><line x1="9" y1="339.38" x2="11" y2="339.38" stroke="#444" stroke-width="0.8"/><line x1="9" y1="341.75" x2="11" y2="341.75" stroke="#444" stroke-width="0.8"/><line x1="6" y1="344.12" x2="11" y2="344.12" stroke="#555" stroke-width="1"/><line x1="9" y1="346.50" x2="11" y2="346.50" stroke="#444" stroke-width="0.8"/><line x1="9" y1="348.88" x2="11" y2="348.88" stroke="#444" stroke-width="0.8"/><line x1="9" y1="351.25" x2="11" y2="351.25" stroke="#444" stroke-width="0.8"/><line x1="9" y1="353.62" x2="11" y2="353.62" stroke="#444" stroke-width="0.8"/><line x1="0" y1="356.00" x2="11" y2="356.00" stroke="#505050" stroke-width="1"/><line x1="9" y1="358.38" x2="11" y2="358.38" stroke="#444" stroke-width="0.8"/><line x1="9" y1="360.75" x2="11" y2="360.75" stroke="#444" stroke-width="0.8"/><line x1="9" y1="363.12" x2="11" y2="363.12" stroke="#444" stroke-width="0.8"/><line x1="9" y1="365.50" x2="11" y2="365.50" stroke="#444" stroke-width="0.8"/><line x1="6" y1="367.88" x2="11" y2="367.88" stroke="#555" stroke-width="1"/><line x1="9" y1="370.25" x2="11" y2="370.25" stroke="#444" stroke-width="0.8"/><line x1="9" y1="372.62" x2="11" y2="372.62" stroke="#444" stroke-width="0.8"/><line x1="9" y1="375.00" x2="11" y2="375.00" stroke="#444" stroke-width="0.8"/><line x1="9" y1="377.38" x2="11" y2="377.38" stroke="#444" stroke-width="0.8"/><line x1="0" y1="379.75" x2="11" y2="379.75" stroke="#505050" stroke-width="1"/><line x1="9" y1="382.12" x2="11" y2="382.12" stroke="#444" stroke-width="0.8"/><line x1="9" y1="384.50" x2="11" y2="384.50" stroke="#444" stroke-width="0.8"/><line x1="9" y1="386.88" x2="11" y2="386.88" stroke="#444" stroke-width="0.8"/><line x1="9" y1="389.25" x2="11" y2="389.25" stroke="#444" stroke-width="0.8"/><line x1="6" y1="391.62" x2="11" y2="391.62" stroke="#555" stroke-width="1"/><line x1="9" y1="394.00" x2="11" y2="394.00" stroke="#444" stroke-width="0.8"/><line x1="9" y1="396.38" x2="11" y2="396.38" stroke="#444" stroke-width="0.8"/><line x1="9" y1="398.75" x2="11" y2="398.75" stroke="#444" stroke-width="0.8"/></svg>
<div class="a" style="left:27.5px;top:92.05px;width:8px;height:6px;font:7.5px/6px 'Liberation Sans',sans-serif;color:#d8d8d8;text-align:center;transform:rotate(-90deg)">1</div>
<div class="a" style="left:27.5px;top:97.85px;width:8px;height:6px;font:7.5px/6px 'Liberation Sans',sans-serif;color:#d8d8d8;text-align:center;transform:rotate(-90deg)">0</div>
<div class="a" style="left:27.5px;top:115.8px;width:8px;height:6px;font:7.5px/6px 'Liberation Sans',sans-serif;color:#d8d8d8;text-align:center;transform:rotate(-90deg)">0</div>
<div class="a" style="left:27.5px;top:139.55px;width:8px;height:6px;font:7.5px/6px 'Liberation Sans',sans-serif;color:#d8d8d8;text-align:center;transform:rotate(-90deg)">1</div>
<div class="a" style="left:27.5px;top:145.35px;width:8px;height:6px;font:7.5px/6px 'Liberation Sans',sans-serif;color:#d8d8d8;text-align:center;transform:rotate(-90deg)">0</div>
<div class="a" style="left:27.5px;top:163.3px;width:8px;height:6px;font:7.5px/6px 'Liberation Sans',sans-serif;color:#d8d8d8;text-align:center;transform:rotate(-90deg)">2</div>
<div class="a" style="left:27.5px;top:169.1px;width:8px;height:6px;font:7.5px/6px 'Liberation Sans',sans-serif;color:#d8d8d8;text-align:center;transform:rotate(-90deg)">0</div>
<div class="a" style="left:27.5px;top:187.05px;width:8px;height:6px;font:7.5px/6px 'Liberation Sans',sans-serif;color:#d8d8d8;text-align:center;transform:rotate(-90deg)">3</div>
<div class="a" style="left:27.5px;top:192.85px;width:8px;height:6px;font:7.5px/6px 'Liberation Sans',sans-serif;color:#d8d8d8;text-align:center;transform:rotate(-90deg)">0</div>
<div class="a" style="left:27.5px;top:210.8px;width:8px;height:6px;font:7.5px/6px 'Liberation Sans',sans-serif;color:#d8d8d8;text-align:center;transform:rotate(-90deg)">4</div>
<div class="a" style="left:27.5px;top:216.6px;width:8px;height:6px;font:7.5px/6px 'Liberation Sans',sans-serif;color:#d8d8d8;text-align:center;transform:rotate(-90deg)">0</div>
<div class="a" style="left:27.5px;top:234.55px;width:8px;height:6px;font:7.5px/6px 'Liberation Sans',sans-serif;color:#d8d8d8;text-align:center;transform:rotate(-90deg)">5</div>
<div class="a" style="left:27.5px;top:240.35px;width:8px;height:6px;font:7.5px/6px 'Liberation Sans',sans-serif;color:#d8d8d8;text-align:center;transform:rotate(-90deg)">0</div>
<div class="a" style="left:27.5px;top:258.3px;width:8px;height:6px;font:7.5px/6px 'Liberation Sans',sans-serif;color:#d8d8d8;text-align:center;transform:rotate(-90deg)">6</div>
<div class="a" style="left:27.5px;top:264.1px;width:8px;height:6px;font:7.5px/6px 'Liberation Sans',sans-serif;color:#d8d8d8;text-align:center;transform:rotate(-90deg)">0</div>
<div class="a" style="left:27.5px;top:282.05px;width:8px;height:6px;font:7.5px/6px 'Liberation Sans',sans-serif;color:#d8d8d8;text-align:center;transform:rotate(-90deg)">7</div>
<div class="a" style="left:27.5px;top:287.85px;width:8px;height:6px;font:7.5px/6px 'Liberation Sans',sans-serif;color:#d8d8d8;text-align:center;transform:rotate(-90deg)">0</div>
<div class="a" style="left:27.5px;top:305.8px;width:8px;height:6px;font:7.5px/6px 'Liberation Sans',sans-serif;color:#d8d8d8;text-align:center;transform:rotate(-90deg)">8</div>
<div class="a" style="left:27.5px;top:311.6px;width:8px;height:6px;font:7.5px/6px 'Liberation Sans',sans-serif;color:#d8d8d8;text-align:center;transform:rotate(-90deg)">0</div>
<div class="a" style="left:27.5px;top:329.55px;width:8px;height:6px;font:7.5px/6px 'Liberation Sans',sans-serif;color:#d8d8d8;text-align:center;transform:rotate(-90deg)">9</div>
<div class="a" style="left:27.5px;top:335.35px;width:8px;height:6px;font:7.5px/6px 'Liberation Sans',sans-serif;color:#d8d8d8;text-align:center;transform:rotate(-90deg)">0</div>
<div class="a" style="left:27.5px;top:353.3px;width:8px;height:6px;font:7.5px/6px 'Liberation Sans',sans-serif;color:#d8d8d8;text-align:center;transform:rotate(-90deg)">1</div>
<div class="a" style="left:27.5px;top:359.1px;width:8px;height:6px;font:7.5px/6px 'Liberation Sans',sans-serif;color:#d8d8d8;text-align:center;transform:rotate(-90deg)">0</div>
<div class="a" style="left:27.5px;top:364.9px;width:8px;height:6px;font:7.5px/6px 'Liberation Sans',sans-serif;color:#d8d8d8;text-align:center;transform:rotate(-90deg)">0</div>
<div class="a" style="left:27.5px;top:377.05px;width:8px;height:6px;font:7.5px/6px 'Liberation Sans',sans-serif;color:#d8d8d8;text-align:center;transform:rotate(-90deg)">1</div>
<div class="a" style="left:27.5px;top:382.85px;width:8px;height:6px;font:7.5px/6px 'Liberation Sans',sans-serif;color:#d8d8d8;text-align:center;transform:rotate(-90deg)">1</div>
<div class="a" style="left:27.5px;top:388.65px;width:8px;height:6px;font:7.5px/6px 'Liberation Sans',sans-serif;color:#d8d8d8;text-align:center;transform:rotate(-90deg)">0</div>
<div class="a" style="left:27.5px;top:400.8px;width:8px;height:6px;font:7.5px/6px 'Liberation Sans',sans-serif;color:#d8d8d8;text-align:center;transform:rotate(-90deg)">1</div>
<div class="a" style="left:27.5px;top:406.6px;width:8px;height:6px;font:7.5px/6px 'Liberation Sans',sans-serif;color:#d8d8d8;text-align:center;transform:rotate(-90deg)">2</div>
<div class="a" style="left:27.5px;top:412.4px;width:8px;height:6px;font:7.5px/6px 'Liberation Sans',sans-serif;color:#d8d8d8;text-align:center;transform:rotate(-90deg)">0</div>
<div class="a" style="left:27.5px;top:424.55px;width:8px;height:6px;font:7.5px/6px 'Liberation Sans',sans-serif;color:#d8d8d8;text-align:center;transform:rotate(-90deg)">1</div>
<div class="a" style="left:27.5px;top:430.35px;width:8px;height:6px;font:7.5px/6px 'Liberation Sans',sans-serif;color:#d8d8d8;text-align:center;transform:rotate(-90deg)">3</div>
<div class="a" style="left:27.5px;top:436.15px;width:8px;height:6px;font:7.5px/6px 'Liberation Sans',sans-serif;color:#d8d8d8;text-align:center;transform:rotate(-90deg)">0</div>
<div class="a" style="left:27.5px;top:448.3px;width:8px;height:6px;font:7.5px/6px 'Liberation Sans',sans-serif;color:#d8d8d8;text-align:center;transform:rotate(-90deg)">1</div>
<div class="a" style="left:27.5px;top:454.1px;width:8px;height:6px;font:7.5px/6px 'Liberation Sans',sans-serif;color:#d8d8d8;text-align:center;transform:rotate(-90deg)">4</div>
<div class="a" style="left:27.5px;top:459.9px;width:8px;height:6px;font:7.5px/6px 'Liberation Sans',sans-serif;color:#d8d8d8;text-align:center;transform:rotate(-90deg)">0</div>
<div class="a" style="left:27.5px;top:472.05px;width:8px;height:6px;font:7.5px/6px 'Liberation Sans',sans-serif;color:#d8d8d8;text-align:center;transform:rotate(-90deg)">1</div>
<div class="a" style="left:27.5px;top:477.85px;width:8px;height:6px;font:7.5px/6px 'Liberation Sans',sans-serif;color:#d8d8d8;text-align:center;transform:rotate(-90deg)">5</div>
<div class="a" style="left:27.5px;top:483.65px;width:8px;height:6px;font:7.5px/6px 'Liberation Sans',sans-serif;color:#d8d8d8;text-align:center;transform:rotate(-90deg)">0</div>
<div class="a" style="left:38px;top:91px;width:734px;height:1px;background:#d2d2d2;"></div>
<div class="a" style="left:6px;top:81px;width:16.5px;height:13.5px;background:#2e2e2e;"></div>
<svg class="a" style="left:7px;top:80.5px;" width="14" height="14" viewBox="0 0 14 14"><path d="M3.5 1.5 L11.5 8 L7.5 8.5 L5 12.5 Z" fill="none" stroke="#d0d0d0" stroke-width="1.1"/></svg>
<svg class="a" style="left:7px;top:96.4px;" width="14" height="14" viewBox="0 0 14 14"><path d="M3.5 1.5 L11.5 8 L7.5 8.5 L5 12.5 Z" fill="#d0d0d0"/></svg>
<svg class="a" style="left:7px;top:111px;" width="14" height="14" viewBox="0 0 14 14"><path d="M3 1.5 L8 1.5 L10.5 4 L10.5 9 M3 1.5 L3 12 L7 12" fill="none" stroke="#d0d0d0" stroke-width="1.1"/><path d="M8 8 L12 12 M8 8 L8 11 M8 8 L11 8" stroke="#d0d0d0" stroke-width="1"/></svg>
<svg class="a" style="left:7px;top:126px;" width="14" height="14" viewBox="0 0 14 14"><path d="M1.5 2 L1.5 12 M12.5 2 L12.5 12 M3 7 L11 7 M5 5 L3 7 L5 9 M9 5 L11 7 L9 9" stroke="#d0d0d0" stroke-width="1.1" fill="none"/></svg>
<svg class="a" style="left:7px;top:141px;" width="14" height="14" viewBox="0 0 14 14"><path d="M2 6 L2 12 L12 12 L12 6" stroke="#d0d0d0" stroke-width="1.3" fill="none"/><path d="M5 1 L9 5 L5 9 Z" fill="#d0d0d0"/></svg>
<svg class="a" style="left:7px;top:158.3px;" width="14" height="14" viewBox="0 0 14 14"><path d="M2.5 2.5 L11.5 2.5 M7 2.5 L7 11 M2.5 2.5 L2.5 4.5 M11.5 2.5 L11.5 4.5 M5 11 L9 11" stroke="#d0d0d0" stroke-width="1.5" fill="none"/></svg>
<svg class="a" style="left:7px;top:173.7px;" width="14" height="14" viewBox="0 0 14 14"><path d="M3 12 L11 2" stroke="#d0d0d0" stroke-width="1.3"/></svg>
<svg class="a" style="left:7px;top:189.3px;" width="14" height="14" viewBox="0 0 14 14"><path d="M2.5 12 L4 7 L9 2 L12 5 L7 10 Z" fill="#d0d0d0"/><path d="M2.5 12 L6 8.5" stroke="#535353" stroke-width="1"/></svg>
<svg class="a" style="left:7px;top:203.9px;" width="14" height="14" viewBox="0 0 14 14"><path d="M2 12 L3 8.5 L10 1.5 L12.5 4 L5.5 11 Z" fill="#d0d0d0"/></svg>
<svg class="a" style="left:7px;top:218.4px;" width="14" height="14" viewBox="0 0 14 14"><rect x="2" y="2" width="10" height="10" fill="none" stroke="#d0d0d0" stroke-width="1.1"/><path d="M2 2 L12 12 M12 2 L2 12" stroke="#d0d0d0" stroke-width="1"/></svg>
<svg class="a" style="left:7px;top:234px;" width="14" height="14" viewBox="0 0 14 14"><rect x="2" y="2.5" width="10" height="9" fill="none" stroke="#d0d0d0" stroke-width="1.2"/></svg>
<svg class="a" style="left:7px;top:248.6px;" width="14" height="14" viewBox="0 0 14 14"><rect x="2" y="2" width="10" height="10" fill="none" stroke="#d0d0d0" stroke-width="1.1"/><path d="M2 5 L12 5 M2 8 L12 8 M5.5 5 L5.5 12" stroke="#d0d0d0" stroke-width="1"/></svg>
<svg class="a" style="left:7px;top:262px;" width="14" height="14" viewBox="0 0 14 14"><rect x="2" y="2" width="10" height="10" fill="none" stroke="#d0d0d0" stroke-width="1.1"/><path d="M2 5 L12 5 M2 8.5 L12 8.5 M5.5 2 L5.5 12 M8.5 2 L8.5 12" stroke="#d0d0d0" stroke-width="0.9"/></svg>
<svg class="a" style="left:7px;top:281px;" width="14" height="14" viewBox="0 0 14 14"><circle cx="3.5" cy="10" r="2" fill="none" stroke="#d0d0d0" stroke-width="1.2"/><circle cx="10.5" cy="10" r="2" fill="none" stroke="#d0d0d0" stroke-width="1.2"/><path d="M4.5 8 L10 1.5 M9.5 8 L4 1.5" stroke="#d0d0d0" stroke-width="1.2"/></svg>
<svg class="a" style="left:7px;top:296.6px;" width="14" height="14" viewBox="0 0 14 14"><path d="M1 2 L8 5 L5 6 L4 9 Z" fill="#d0d0d0"/><rect x="3" y="3" width="9" height="9" fill="none" stroke="#d0d0d0" stroke-width="1" stroke-dasharray="1.5 1"/></svg>
<svg class="a" style="left:7px;top:311px;" width="14" height="14" viewBox="0 0 14 14"><defs><linearGradient id="g1" x1="0" x2="1"><stop offset="0" stop-color="#333"/><stop offset="1" stop-color="#eee"/></linearGradient></defs><rect x="2" y="2" width="10" height="10" fill="url(#g1)" stroke="#d0d0d0" stroke-width="1"/></svg>
<svg class="a" style="left:7px;top:326.8px;" width="14" height="14" viewBox="0 0 14 14"><rect x="2" y="2" width="10" height="10" fill="#888" stroke="#d0d0d0" stroke-width="1"/><circle cx="7" cy="7" r="3" fill="#444"/></svg>
<svg class="a" style="left:7px;top:342.4px;" width="14" height="14" viewBox="0 0 14 14"><rect x="2" y="2" width="10" height="10" fill="none" stroke="#d0d0d0" stroke-width="1.1"/><path d="M4 4.5 L10 4.5 M4 6.5 L10 6.5 M4 8.5 L8 8.5" stroke="#d0d0d0" stroke-width="0.9"/><path d="M9 12 L12 9 L12 12 Z" fill="#d0d0d0"/></svg>
<svg class="a" style="left:7px;top:358px;" width="14" height="14" viewBox="0 0 14 14"><path d="M2 12.5 L8 6.5 M6.5 5 L10.5 1.5 L12.5 3.5 L9 7.5 Z" fill="#d0d0d0" stroke="#d0d0d0" stroke-width="1.3"/><circle cx="11" cy="12" r="1.5" fill="#d0d0d0"/></svg>
<svg class="a" style="left:7px;top:374px;" width="14" height="14" viewBox="0 0 14 14"><path d="M3 7 L3 3 Q3.8 2 4.6 3 L4.6 6 L4.6 2 Q5.5 1 6.4 2 L6.4 6 L6.4 2.3 Q7.3 1.3 8.2 2.3 L8.2 6 L8.2 3.3 Q9.1 2.5 10 3.3 L10 9 Q9 13 6 13 Q3.5 13 2 10 L1 8 Q1.5 7 2.5 7.8 Z" fill="#d0d0d0"/></svg>
<svg class="a" style="left:7px;top:389px;" width="14" height="14" viewBox="0 0 14 14"><circle cx="5.5" cy="5.5" r="3.8" fill="none" stroke="#d0d0d0" stroke-width="1.3"/><path d="M8.3 8.3 L12.5 12.5" stroke="#d0d0d0" stroke-width="1.8"/></svg>
<svg class="a" style="left:5px;top:405px;" width="10" height="10" viewBox="0 0 10 10"><circle cx="4.5" cy="5" r="3.8" fill="#eee"/><rect x="2" y="3" width="5" height="4" fill="#333" transform="rotate(45 4.5 5)"/></svg>
<svg class="a" style="left:16px;top:405px;" width="9" height="10" viewBox="0 0 9 10"><path d="M1.5 3 Q6.5 2 7 7 M5.5 5.5 L7 7.5 L8.5 5.5 M1 1.5 L3 3 L1 4.5" stroke="#d0d0d0" stroke-width="1" fill="none"/></svg>
<svg class="a" style="left:5px;top:418px;" width="13" height="13" viewBox="0 0 13 13"><rect x="0.5" y="0.5" width="12" height="12" fill="#fff" stroke="#999"/><path d="M1 12 L12 1" stroke="#d4181f" stroke-width="1.8"/></svg>
<svg class="a" style="left:10.5px;top:423.5px;" width="13" height="13" viewBox="0 0 13 13"><rect x="0.5" y="0.5" width="12" height="12" fill="#fff" stroke="#999"/><rect x="3" y="3" width="7" height="7" fill="#333"/><path d="M1 12 L12 1" stroke="#d4181f" stroke-width="1.8"/></svg>
<svg class="a" style="left:6px;top:441px;" width="9" height="9" viewBox="0 0 9 9"><rect x="1" y="1" width="7" height="7" fill="#444" stroke="#999" stroke-width="1"/><rect x="3" y="3" width="3" height="3" fill="#888"/></svg>
<div class="t" id="t64" style="left:16px;top:441.5px;font-size:9px;color:#bbbbbb;font-family:'Liberation Sans',sans-serif;font-weight:bold;">T</div>
<div class="a" style="left:6px;top:452px;width:18px;height:17px;background:#2e2e2e;"></div>
<svg class="a" style="left:8px;top:455px;" width="13" height="11" viewBox="0 0 13 11"><rect x="0.5" y="0.5" width="12" height="10" fill="#fff" stroke="#999"/><path d="M1 10 L12 1" stroke="#d4181f" stroke-width="1.6"/></svg>
<div class="a" style="left:21px;top:466px;width:1.5px;height:1.5px;background:#ddd;"></div>
<svg class="a" style="left:8px;top:474px;" width="13" height="10" viewBox="0 0 13 10"><rect x="2" y="2" width="9" height="7" fill="#bbb"/><rect x="0.5" y="0.5" width="4" height="3" fill="#ddd"/></svg>
<div class="a" style="left:20.5px;top:123.5px;width:1.5px;height:1.5px;background:#cfcfcf;"></div>
<div class="a" style="left:20.5px;top:153.5px;width:1.5px;height:1.5px;background:#cfcfcf;"></div>
<div class="a" style="left:20.5px;top:170.8px;width:1.5px;height:1.5px;background:#cfcfcf;"></div>
<div class="a" style="left:20.5px;top:201.8px;width:1.5px;height:1.5px;background:#cfcfcf;"></div>
<div class="a" style="left:20.5px;top:216.4px;width:1.5px;height:1.5px;background:#cfcfcf;"></div>
<div class="a" style="left:20.5px;top:230.9px;width:1.5px;height:1.5px;background:#cfcfcf;"></div>
<div class="a" style="left:20.5px;top:246.5px;width:1.5px;height:1.5px;background:#cfcfcf;"></div>
<div class="a" style="left:20.5px;top:293.5px;width:1.5px;height:1.5px;background:#cfcfcf;"></div>
<div class="a" style="left:20.5px;top:309.1px;width:1.5px;height:1.5px;background:#cfcfcf;"></div>
<div class="a" style="left:20.5px;top:354.9px;width:1.5px;height:1.5px;background:#cfcfcf;"></div>
<div class="a" style="left:20.5px;top:370.5px;width:1.5px;height:1.5px;background:#cfcfcf;"></div>
<div class="a" style="left:117.8px;top:138px;width:131.7px;height:217.8px;background:#ffffff;border:1px solid #a0a0a0"></div>
<svg class="a" style="left:0;top:0" width="960" height="492" viewBox="0 0 960 492">
<polygon points="249,255.3 249,355 130,355 156.2,327.6" fill="#dcdcdc"/>
<polygon points="168.8,336.2 249,274.4 249,355 186.1,355" fill="#d5c6c0"/>
<polygon points="118.5,296 168.3,336.2 144.9,355 118.5,355" fill="#4ea9dd"/>
<polygon points="119.5,355 153.4,328.4 168.3,336.2 144.9,355" fill="#3c93c6"/>
</svg>
<svg class="a" style="left:0;top:0" width="960" height="492" viewBox="0 0 960 492">
<rect x="134.5" y="174.5" width="99.5" height="27" fill="none" stroke="#8fb0c8" stroke-width="1"/>
</svg>
<div class="t" id="t65" style="left:151.5px;top:177px;font-size:14px;color:#1a1a1a;font-family:'Liberation Sans',sans-serif;font-weight:bold;transform:scaleX(0.949);">&lt;&lt; 氏名 &gt;&gt;</div>
<div class="t" id="t66" style="left:134.4px;top:206.95px;font-size:6.5px;color:#1a1a1a;font-family:'Liberation Sans',sans-serif;font-weight:bold;transform:scaleX(0.890);">&lt;&lt; 所在地 &gt;&gt;</div>
<div class="t" id="t67" style="left:134.4px;top:236.35px;font-size:8.5px;color:#222222;font-family:'Liberation Sans',sans-serif;transform:scaleX(0.898);">TEL</div>
<div class="t" id="t68" style="left:160px;top:237.1px;font-size:7px;color:#1a1a1a;font-family:'Liberation Sans',sans-serif;font-weight:bold;transform:scaleX(0.784);">&lt;&lt;TEL&gt;&gt;</div>
<svg class="a" style="left:0;top:0" width="960" height="492" viewBox="0 0 960 492"><rect x="132.0" y="172.0" width="5" height="5" fill="#fff" stroke="#8aa3b5" stroke-width="1"/><rect x="231.5" y="172.0" width="5" height="5" fill="#fff" stroke="#8aa3b5" stroke-width="1"/><rect x="132.0" y="185.5" width="5" height="5" fill="#fff" stroke="#8aa3b5" stroke-width="1"/><rect x="231.5" y="185.5" width="5" height="5" fill="#fff" stroke="#8aa3b5" stroke-width="1"/><rect x="132.0" y="199.0" width="5" height="5" fill="#fff" stroke="#8aa3b5" stroke-width="1"/><rect x="231.5" y="199.0" width="5" height="5" fill="#fff" stroke="#8aa3b5" stroke-width="1"/><circle cx="184.5" cy="174.5" r="2.6" fill="#fff" stroke="#8aa3b5" stroke-width="1"/><circle cx="184.5" cy="201.5" r="2.6" fill="#fff" stroke="#8aa3b5" stroke-width="1"/><rect x="211" y="172" width="5" height="5" fill="#3d8de0"/><rect x="231.5" y="180" width="5" height="5" fill="#f2dc2a" stroke="#8aa3b5" stroke-width="0.6"/><ellipse cx="211" cy="201" rx="2" ry="3.4" fill="none" stroke="#2f6fb8" stroke-width="1.4" transform="rotate(15 211 201)"/></svg>
<div class="a" style="left:377px;top:490px;width:402px;height:2px;background:#e4e4e4;"></div>
<div class="a" style="left:303px;top:144.5px;width:222px;height:214.5px;background:#535353;border-radius:4px 4px 0 0;overflow:hidden;box-shadow:0 0 0 1px #444444"><div class="a" style="left:0;top:0;width:222px;height:8px;background:#363636"></div><div class="a" style="left:0;top:8px;width:222px;height:16.5px;background:#434343"></div><div class="a" style="left:0;top:8px;width:52px;height:16.5px;background:#535353"></div></div>
<div class="a" style="left:505px;top:147px;width:5px;height:1px;background:#b0b0b0;"></div>
<div class="a" style="left:505px;top:149px;width:5px;height:1px;background:#b0b0b0;"></div>
<svg class="a" style="left:515.5px;top:145.5px;" width="6" height="6" viewBox="0 0 6 6"><path d="M0.7 0.7 L5.3 5.3 M5.3 0.7 L0.7 5.3" stroke="#cfcfcf" stroke-width="1.2"/></svg>
<svg class="a" style="left:308px;top:158px;" width="3" height="6" viewBox="0 0 3 6"><path d="M0 0.5 L3 0.5 M0 2.5 L3 2.5 M0 4.5 L3 4.5" stroke="#999" stroke-width="0.8"/></svg>
<div class="t" id="t69" style="left:312.5px;top:156.25px;font-size:9.5px;color:#e0e0e0;font-family:'Liberation Sans',sans-serif;transform:scaleX(0.710);">データ結合</div>
<div class="t" id="t70" style="left:363px;top:156.5px;font-size:9px;color:#7e7e7e;font-family:'Liberation Sans',sans-serif;transform:scaleX(0.622);">スクリプト</div>
<div class="t" id="t71" style="left:403px;top:156.5px;font-size:9px;color:#7e7e7e;font-family:'Liberation Sans',sans-serif;transform:scaleX(0.653);">スクリプトラベル</div>
<svg class="a" style="left:513px;top:158px;" width="7" height="6" viewBox="0 0 7 6"><path d="M0 0.5 L7 0.5 M0 2.5 L7 2.5 M0 4.5 L7 4.5" stroke="#8a8a8a" stroke-width="1"/></svg>
<div class="t" id="t72" style="left:307px;top:173.2px;font-size:10px;color:#e0e0e0;font-family:'Liberation Sans',sans-serif;transform:scaleX(0.804);">名刺データ.csv</div>
<svg class="a" style="left:507px;top:173px;" width="11" height="10" viewBox="0 0 11 10"><path d="M0.5 5 L6 5 M3.5 2.5 L6 5 L3.5 7.5" stroke="#ccc" stroke-width="1.2" fill="none"/><rect x="7" y="1" width="3.5" height="8" fill="none" stroke="#ccc" stroke-width="1"/></svg>
<div class="a" style="left:306px;top:185px;width:216px;height:14px;background:#535353;"></div>
<div class="a" style="left:306px;top:198.5px;width:216px;height:1px;background:#4a4a4a;"></div>
<div class="t" id="t73" style="left:307.5px;top:187.75px;font-size:9.5px;color:#e0e0e0;font-family:'Liberation Sans',sans-serif;">T</div>
<div class="t" id="t74" style="left:317.5px;top:187.75px;font-size:9.5px;color:#e0e0e0;font-family:'Liberation Sans',sans-serif;transform:scaleX(0.850);">氏名</div>
<div class="t" id="t75" style="left:516.5px;top:188px;font-size:9px;color:#e0e0e0;font-family:'Liberation Sans',sans-serif;">1</div>
<div class="a" style="left:306px;top:199.3px;width:216px;height:14px;background:#535353;"></div>
<div class="a" style="left:306px;top:212.8px;width:216px;height:1px;background:#4a4a4a;"></div>
<div class="t" id="t76" style="left:307.5px;top:202.05px;font-size:9.5px;color:#e0e0e0;font-family:'Liberation Sans',sans-serif;">T</div>
<div class="t" id="t77" style="left:317.5px;top:202.05px;font-size:9.5px;color:#e0e0e0;font-family:'Liberation Sans',sans-serif;transform:scaleX(0.800);">所在地</div>
<div class="t" id="t78" style="left:516.5px;top:202.3px;font-size:9px;color:#e0e0e0;font-family:'Liberation Sans',sans-serif;">1</div>
<div class="a" style="left:306px;top:213.5px;width:216px;height:14px;background:#535353;"></div>
<div class="a" style="left:306px;top:227px;width:216px;height:1px;background:#4a4a4a;"></div>
<div class="t" id="t79" style="left:307.5px;top:216.25px;font-size:9.5px;color:#e0e0e0;font-family:'Liberation Sans',sans-serif;">T</div>
<div class="t" id="t80" style="left:317.5px;top:216.25px;font-size:9.5px;color:#e0e0e0;font-family:'Liberation Sans',sans-serif;transform:scaleX(0.860);">TEL</div>
<div class="t" id="t81" style="left:516.5px;top:216.5px;font-size:9px;color:#e0e0e0;font-family:'Liberation Sans',sans-serif;">1</div>
<div class="a" style="left:303px;top:184.5px;width:223px;height:46.2px;border:3px solid #d8121c"></div>
<div class="a" style="left:309.2px;top:239.8px;width:210px;height:84.9px;background:#ffffff;"></div>
<div class="t" id="t82" style="left:337.7px;top:244.8px;font-size:11px;color:#1f1f1f;font-family:'Liberation Sans',sans-serif;font-weight:bold;transform:scaleX(0.921);">データ結合パレットに表示された</div>
<div class="t" id="t83" style="left:315px;top:264.8px;font-size:11px;color:#1f1f1f;font-family:'Liberation Sans',sans-serif;font-weight:bold;transform:scaleX(0.918);">Excelデータの項目をドラッグ＆ドロップで</div>
<div class="t" id="t84" style="left:333.5px;top:285.1px;font-size:11px;color:#1f1f1f;font-family:'Liberation Sans',sans-serif;font-weight:bold;transform:scaleX(0.914);">フォーマットのテキストフレームに</div>
<div class="t" id="t85" style="left:389px;top:305.1px;font-size:11px;color:#1f1f1f;font-family:'Liberation Sans',sans-serif;font-weight:bold;transform:scaleX(0.909);">割り当てる</div>
<div class="a" style="left:303px;top:336px;width:222px;height:1px;background:#474747;"></div>
<div class="a" style="left:307.5px;top:343px;width:7.5px;height:7.5px;border:1px solid #bdbdbd"></div>
<div class="t" id="t86" style="left:317px;top:342.25px;font-size:9.5px;color:#e0e0e0;font-family:'Liberation Sans',sans-serif;transform:scaleX(0.780);">プレビュー</div>
<svg class="a" style="left:442px;top:343px;" width="7" height="8" viewBox="0 0 7 8"><path d="M1 0.5 L1 7.5" stroke="#7c7c7c" stroke-width="1.2"/><path d="M6.5 0.5 L2.5 4 L6.5 7.5 Z" fill="#7c7c7c"/></svg>
<svg class="a" style="left:459px;top:343px;" width="6" height="8" viewBox="0 0 6 8"><path d="M5 0.5 L1 4 L5 7.5 Z" fill="#7c7c7c"/></svg>
<div class="a" style="left:467px;top:341px;width:17px;height:12px;background:#4a4a4a;"></div>
<div class="t" id="t87" style="left:472px;top:342.8px;font-size:9px;color:#bdbdbd;font-family:'Liberation Sans',sans-serif;">1</div>
<svg class="a" style="left:489px;top:343px;" width="6" height="8" viewBox="0 0 6 8"><path d="M1 0.5 L5 4 L1 7.5 Z" fill="#7c7c7c"/></svg>
<svg class="a" style="left:504px;top:343px;" width="7" height="8" viewBox="0 0 7 8"><path d="M6 0.5 L6 7.5" stroke="#7c7c7c" stroke-width="1.2"/><path d="M0.5 0.5 L4.5 4 L0.5 7.5 Z" fill="#7c7c7c"/></svg>
<div class="a" style="left:303px;top:356px;width:222px;height:3px;background:#4a4a4a;"></div>
<div class="a" style="left:408px;top:357px;width:10px;height:1px;background:#777;"></div>
<div class="a" style="left:614px;top:193px;width:153px;height:243.4px;background:#535353;border-radius:4px 4px 0 0;overflow:hidden;box-shadow:0 0 0 1px #444444"><div class="a" style="left:0;top:0;width:153px;height:8px;background:#363636"></div><div class="a" style="left:0;top:8px;width:153px;height:17px;background:#434343"></div><div class="a" style="left:0;top:8px;width:33.7px;height:17px;background:#535353"></div></div>
<div class="a" style="left:749px;top:196px;width:5px;height:1.3px;background:#aaa;"></div>
<svg class="a" style="left:758.5px;top:194.5px;" width="6" height="6" viewBox="0 0 6 6"><path d="M0.7 0.7 L5.3 5.3 M5.3 0.7 L0.7 5.3" stroke="#cfcfcf" stroke-width="1.2"/></svg>
<svg class="a" style="left:619.5px;top:207px;" width="3" height="6" viewBox="0 0 3 6"><path d="M0 0.5 L3 0.5 M0 2.5 L3 2.5 M0 4.5 L3 4.5" stroke="#999" stroke-width="0.8"/></svg>
<div class="t" id="t88" style="left:626px;top:205.25px;font-size:9.5px;color:#e0e0e0;font-family:'Liberation Sans',sans-serif;transform:scaleX(0.725);">段落</div>
<svg class="a" style="left:755px;top:207px;" width="7" height="6" viewBox="0 0 7 6"><path d="M0 0.5 L7 0.5 M0 2.5 L7 2.5 M0 4.5 L7 4.5" stroke="#8a8a8a" stroke-width="1"/></svg>
<div class="a" style="left:633px;top:222px;width:14px;height:13.5px;background:#2b2b2b;"></div>
<svg class="a" style="left:620.3px;top:223.7px;" width="10" height="10" viewBox="0 0 10 10"><path d="M0 0.5 L10 0.5 M0 2.5 L7 2.5 M0 4.5 L10 4.5 M0 6.5 L7 6.5 M0 8.5 L10 8.5" stroke="#a8a8a8" stroke-width="1.1"/></svg>
<svg class="a" style="left:635.6px;top:223.7px;" width="10" height="10" viewBox="0 0 10 10"><path d="M0 0.5 L10 0.5 M1.5 2.5 L8.5 2.5 M0 4.5 L10 4.5 M1.5 6.5 L8.5 6.5 M0 8.5 L10 8.5" stroke="#d8d8d8" stroke-width="1.1"/></svg>
<svg class="a" style="left:650.4px;top:223.7px;" width="10" height="10" viewBox="0 0 10 10"><path d="M0 0.5 L10 0.5 M3 2.5 L10 2.5 M0 4.5 L10 4.5 M3 6.5 L10 6.5 M0 8.5 L10 8.5" stroke="#a8a8a8" stroke-width="1.1"/></svg>
<svg class="a" style="left:670px;top:223.7px;" width="10" height="10" viewBox="0 0 10 10"><path d="M0 0.5 L10 0.5 M0 2.5 L10 2.5 M0 4.5 L10 4.5 M0 6.5 L10 6.5 M0 8.5 L6 8.5" stroke="#a8a8a8" stroke-width="1.1"/></svg>
<svg class="a" style="left:685px;top:223.7px;" width="10" height="10" viewBox="0 0 10 10"><path d="M0 0.5 L10 0.5 M0 2.5 L10 2.5 M0 4.5 L10 4.5 M0 6.5 L10 6.5 M2 8.5 L8 8.5" stroke="#a8a8a8" stroke-width="1.1"/></svg>
<svg class="a" style="left:700px;top:223.7px;" width="10" height="10" viewBox="0 0 10 10"><path d="M0 0.5 L10 0.5 M0 2.5 L10 2.5 M0 4.5 L10 4.5 M0 6.5 L10 6.5 M4 8.5 L10 8.5" stroke="#a8a8a8" stroke-width="1.1"/></svg>
<svg class="a" style="left:715px;top:223.7px;" width="10" height="10" viewBox="0 0 10 10"><path d="M0 0.5 L10 0.5 M0 2.5 L10 2.5 M0 4.5 L10 4.5 M0 6.5 L10 6.5 M0 8.5 L10 8.5" stroke="#a8a8a8" stroke-width="1.1"/></svg>
<svg class="a" style="left:735px;top:223.7px;" width="10" height="10" viewBox="0 0 10 10"><path d="M0 0.5 L7 0.5 M2 2.5 L7 2.5 M0 4.5 L7 4.5 M2 6.5 L7 6.5 M0 8.5 L7 8.5" stroke="#a8a8a8" stroke-width="1.1"/><path d="M9.5 0 L9.5 10" stroke="#a8a8a8" stroke-width="1"/></svg>
<svg class="a" style="left:750.4px;top:223.7px;" width="10" height="10" viewBox="0 0 10 10"><path d="M3 0.5 L10 0.5 M3 2.5 L8 2.5 M3 4.5 L10 4.5 M3 6.5 L8 6.5 M3 8.5 L10 8.5" stroke="#a8a8a8" stroke-width="1.1"/><path d="M0.5 0 L0.5 10" stroke="#a8a8a8" stroke-width="1"/></svg>
<svg class="a" style="left:619px;top:245.5px;" width="11" height="11" viewBox="0 0 11 11"><path d="M4 1 L10 1 M4 3.5 L10 3.5 M4 6 L10 6 M4 8.5 L10 8.5" stroke="#bdbdbd" stroke-width="1"/><path d="M0 5 L3 5 M1.5 3.5 L1.5 6.5" stroke="#ddd" stroke-width="1"/></svg>
<div class="a" style="left:632.4px;top:245.5px;width:9.6px;height:11px;background:#444444;border:1px solid #5c5c5c;"></div>
<svg class="a" style="left:632.4px;top:245.5px;" width="9.6" height="11" viewBox="0 0 9.6 11"><path d="M2.5 4.4 Q4.8 -0.1 7.1 4.4 M2.5 6.6 Q4.8 11.1 7.1 6.6" stroke="#bdbdbd" stroke-width="1" fill="none"/></svg>
<div class="a" style="left:642.5px;top:245.5px;width:42.5px;height:11px;background:#444444;border:1px solid #5c5c5c;"></div>
<div class="t" id="t89" style="left:644.6px;top:246.55px;font-size:9.5px;color:#e0e0e0;font-family:'Liberation Sans',sans-serif;transform:scaleX(0.901);">0 mm</div>
<svg class="a" style="left:694.4px;top:245.5px;" width="11" height="11" viewBox="0 0 11 11"><path d="M4 1 L10 1 M4 3.5 L10 3.5 M4 6 L10 6 M4 8.5 L10 8.5" stroke="#bdbdbd" stroke-width="1"/><path d="M0 5 L3 5 M1.5 3.5 L1.5 6.5" stroke="#ddd" stroke-width="1"/></svg>
<div class="a" style="left:708.7px;top:245.5px;width:9.3px;height:11px;background:#444444;border:1px solid #5c5c5c;"></div>
<svg class="a" style="left:708.7px;top:245.5px;" width="9.3" height="11" viewBox="0 0 9.3 11"><path d="M2.4 4.4 Q4.7 -0.1 7.0 4.4 M2.4 6.6 Q4.7 11.1 7.0 6.6" stroke="#bdbdbd" stroke-width="1" fill="none"/></svg>
<div class="a" style="left:718.5px;top:245.5px;width:43.5px;height:11px;background:#444444;border:1px solid #5c5c5c;"></div>
<div class="t" id="t90" style="left:721.3px;top:246.55px;font-size:9.5px;color:#e0e0e0;font-family:'Liberation Sans',sans-serif;transform:scaleX(0.901);">0 mm</div>
<svg class="a" style="left:619px;top:262px;" width="11" height="11" viewBox="0 0 11 11"><path d="M4 1 L10 1 M4 3.5 L10 3.5 M4 6 L10 6 M4 8.5 L10 8.5" stroke="#bdbdbd" stroke-width="1"/><path d="M0 5 L3 5 M1.5 3.5 L1.5 6.5" stroke="#ddd" stroke-width="1"/></svg>
<div class="a" style="left:632.4px;top:262px;width:9.6px;height:11.4px;background:#444444;border:1px solid #5c5c5c;"></div>
<svg class="a" style="left:632.4px;top:262px;" width="9.6" height="11.4" viewBox="0 0 9.6 11.4"><path d="M2.5 4.6 Q4.8 0.1 7.1 4.6 M2.5 6.8 Q4.8 11.3 7.1 6.8" stroke="#bdbdbd" stroke-width="1" fill="none"/></svg>
<div class="a" style="left:642.5px;top:262px;width:42.5px;height:11.4px;background:#444444;border:1px solid #5c5c5c;"></div>
<div class="t" id="t91" style="left:644.6px;top:263.25px;font-size:9.5px;color:#e0e0e0;font-family:'Liberation Sans',sans-serif;transform:scaleX(0.901);">0 mm</div>
<svg class="a" style="left:694.4px;top:262px;" width="11" height="11" viewBox="0 0 11 11"><path d="M4 1 L10 1 M4 3.5 L10 3.5 M4 6 L10 6 M4 8.5 L10 8.5" stroke="#bdbdbd" stroke-width="1"/><path d="M0 5 L3 5 M1.5 3.5 L1.5 6.5" stroke="#ddd" stroke-width="1"/></svg>
<div class="a" style="left:708.7px;top:262px;width:9.3px;height:11.4px;background:#444444;border:1px solid #5c5c5c;"></div>
<svg class="a" style="left:708.7px;top:262px;" width="9.3" height="11.4" viewBox="0 0 9.3 11.4"><path d="M2.4 4.6 Q4.7 0.1 7.0 4.6 M2.4 6.8 Q4.7 11.3 7.0 6.8" stroke="#bdbdbd" stroke-width="1" fill="none"/></svg>
<div class="a" style="left:718.5px;top:262px;width:43.5px;height:11.4px;background:#444444;border:1px solid #5c5c5c;"></div>
<div class="t" id="t92" style="left:721.3px;top:263.25px;font-size:9.5px;color:#e0e0e0;font-family:'Liberation Sans',sans-serif;transform:scaleX(0.901);">0 mm</div>
<svg class="a" style="left:619px;top:278px;" width="12" height="11" viewBox="0 0 12 11"><rect x="0.5" y="0.5" width="11" height="3" fill="none" stroke="#bdbdbd" stroke-width="1"/><rect x="0.5" y="6.5" width="11" height="3" fill="none" stroke="#bdbdbd" stroke-width="1"/></svg>
<div class="a" style="left:632.4px;top:278px;width:31px;height:10.7px;background:#444444;border:1px solid #5c5c5c;"></div>
<div class="t" id="t93" style="left:634.5px;top:278.85px;font-size:9.5px;color:#e0e0e0;font-family:'Liberation Sans',sans-serif;transform:scaleX(0.760);">自動</div>
<div class="a" style="left:664px;top:278px;width:9.5px;height:10.7px;background:#444444;border:1px solid #5c5c5c;"></div>
<svg class="a" style="left:664px;top:278px;" width="9.5" height="10.7" viewBox="0 0 9.5 10.7"><path d="M2.2 4.1 L4.8 6.6 L7.2 4.1" stroke="#bdbdbd" stroke-width="1.1" fill="none"/></svg>
<div class="t" id="t94" style="left:676px;top:278.85px;font-size:9.5px;color:#e0e0e0;font-family:'Liberation Sans',sans-serif;transform:scaleX(0.800);">行</div>
<svg class="a" style="left:619px;top:298.5px;" width="11" height="11" viewBox="0 0 11 11"><path d="M4 1 L10 1 M4 3.5 L10 3.5 M4 6 L10 6 M4 8.5 L10 8.5" stroke="#bdbdbd" stroke-width="1"/><path d="M0 5 L3 5 M1.5 3.5 L1.5 6.5" stroke="#ddd" stroke-width="1"/></svg>
<div class="a" style="left:632.4px;top:298.5px;width:9.6px;height:11.1px;background:#444444;border:1px solid #5c5c5c;"></div>
<svg class="a" style="left:632.4px;top:298.5px;" width="9.6" height="11.1" viewBox="0 0 9.6 11.1"><path d="M2.5 4.4 Q4.8 -0.0 7.1 4.4 M2.5 6.7 Q4.8 11.1 7.1 6.7" stroke="#bdbdbd" stroke-width="1" fill="none"/></svg>
<div class="a" style="left:642.5px;top:298.5px;width:42.5px;height:11.1px;background:#444444;border:1px solid #5c5c5c;"></div>
<div class="t" id="t95" style="left:644.6px;top:299.6px;font-size:9.5px;color:#e0e0e0;font-family:'Liberation Sans',sans-serif;transform:scaleX(0.901);">0 mm</div>
<svg class="a" style="left:694.4px;top:298.5px;" width="11" height="11" viewBox="0 0 11 11"><path d="M4 1 L10 1 M4 3.5 L10 3.5 M4 6 L10 6 M4 8.5 L10 8.5" stroke="#bdbdbd" stroke-width="1"/><path d="M0 5 L3 5 M1.5 3.5 L1.5 6.5" stroke="#ddd" stroke-width="1"/></svg>
<div class="a" style="left:708.7px;top:298.5px;width:9.3px;height:11.1px;background:#444444;border:1px solid #5c5c5c;"></div>
<svg class="a" style="left:708.7px;top:298.5px;" width="9.3" height="11.1" viewBox="0 0 9.3 11.1"><path d="M2.4 4.4 Q4.7 -0.0 7.0 4.4 M2.4 6.7 Q4.7 11.1 7.0 6.7" stroke="#bdbdbd" stroke-width="1" fill="none"/></svg>
<div class="a" style="left:718.5px;top:298.5px;width:43.5px;height:11.1px;background:#444444;border:1px solid #5c5c5c;"></div>
<div class="t" id="t96" style="left:721.3px;top:299.6px;font-size:9.5px;color:#e0e0e0;font-family:'Liberation Sans',sans-serif;transform:scaleX(0.901);">0 mm</div>
<svg class="a" style="left:619px;top:314.7px;" width="11" height="11" viewBox="0 0 11 11"><path d="M4 1 L10 1 M4 3.5 L10 3.5 M4 6 L10 6 M4 8.5 L10 8.5" stroke="#bdbdbd" stroke-width="1"/><path d="M0 5 L3 5 M1.5 3.5 L1.5 6.5" stroke="#ddd" stroke-width="1"/></svg>
<div class="a" style="left:632.4px;top:314.7px;width:9.6px;height:11.3px;background:#444444;border:1px solid #5c5c5c;"></div>
<svg class="a" style="left:632.4px;top:314.7px;" width="9.6" height="11.3" viewBox="0 0 9.6 11.3"><path d="M2.5 4.6 Q4.8 0.1 7.1 4.6 M2.5 6.8 Q4.8 11.2 7.1 6.8" stroke="#7a7a7a" stroke-width="1" fill="none"/></svg>
<div class="a" style="left:642.5px;top:314.7px;width:31px;height:11.3px;background:#444444;border:1px solid #5c5c5c;"></div>
<div class="t" id="t97" style="left:644.6px;top:315.85px;font-size:9.5px;color:#e0e0e0;font-family:'Liberation Sans',sans-serif;transform:scaleX(0.785);">無視</div>
<div class="a" style="left:675px;top:314.7px;width:10px;height:11.3px;background:#444444;border:1px solid #5c5c5c;"></div>
<svg class="a" style="left:675px;top:314.7px;" width="10" height="11.3" viewBox="0 0 10 11.3"><path d="M2.5 4.5 L5.0 7.0 L7.5 4.5" stroke="#bdbdbd" stroke-width="1.1" fill="none"/></svg>
<svg class="a" style="left:619px;top:335.4px;" width="11" height="11" viewBox="0 0 11 11"><path d="M4 1 L10 1 M4 3.5 L10 3.5 M4 6 L10 6 M4 8.5 L10 8.5" stroke="#bdbdbd" stroke-width="1"/><path d="M0 5 L3 5 M1.5 3.5 L1.5 6.5" stroke="#ddd" stroke-width="1"/></svg>
<div class="a" style="left:632.4px;top:335.4px;width:9.6px;height:10.8px;background:#444444;border:1px solid #5c5c5c;"></div>
<svg class="a" style="left:632.4px;top:335.4px;" width="9.6" height="10.8" viewBox="0 0 9.6 10.8"><path d="M2.5 4.3 Q4.8 -0.2 7.1 4.3 M2.5 6.5 Q4.8 11.0 7.1 6.5" stroke="#bdbdbd" stroke-width="1" fill="none"/></svg>
<div class="a" style="left:642.5px;top:335.4px;width:42.5px;height:10.8px;background:#444444;border:1px solid #5c5c5c;"></div>
<div class="t" id="t98" style="left:644.6px;top:336.35px;font-size:9.5px;color:#e0e0e0;font-family:'Liberation Sans',sans-serif;">0</div>
<svg class="a" style="left:694.4px;top:335.4px;" width="11" height="11" viewBox="0 0 11 11"><path d="M4 1 L10 1 M4 3.5 L10 3.5 M4 6 L10 6 M4 8.5 L10 8.5" stroke="#bdbdbd" stroke-width="1"/><path d="M0 5 L3 5 M1.5 3.5 L1.5 6.5" stroke="#ddd" stroke-width="1"/></svg>
<div class="a" style="left:708.7px;top:335.4px;width:9.3px;height:10.8px;background:#444444;border:1px solid #5c5c5c;"></div>
<svg class="a" style="left:708.7px;top:335.4px;" width="9.3" height="10.8" viewBox="0 0 9.3 10.8"><path d="M2.4 4.3 Q4.7 -0.2 7.0 4.3 M2.4 6.5 Q4.7 11.0 7.0 6.5" stroke="#bdbdbd" stroke-width="1" fill="none"/></svg>
<div class="a" style="left:718.5px;top:335.4px;width:43.5px;height:10.8px;background:#444444;border:1px solid #5c5c5c;"></div>
<div class="t" id="t99" style="left:721.3px;top:336.35px;font-size:9.5px;color:#e0e0e0;font-family:'Liberation Sans',sans-serif;">0</div>
<div class="a" style="left:618px;top:360.2px;width:7.5px;height:7.5px;border:1px solid #bdbdbd"></div>
<div class="t" id="t100" style="left:629.4px;top:359.55px;font-size:9.5px;color:#e0e0e0;font-family:'Liberation Sans',sans-serif;transform:scaleX(0.780);">背景色</div>
<svg class="a" style="left:695.4px;top:359px;" width="10.5" height="11" viewBox="0 0 10.5 11"><rect x="0" y="0" width="10.5" height="11" fill="#9a9a9a"/><rect x="0" y="0" width="3.5" height="3.6" fill="#e8e8e8"/><rect x="7" y="0" width="3.5" height="3.6" fill="#e8e8e8"/><rect x="3.5" y="3.6" width="3.5" height="3.7" fill="#e8e8e8"/><rect x="0" y="7.3" width="3.5" height="3.7" fill="#e8e8e8"/><rect x="7" y="7.3" width="3.5" height="3.7" fill="#e8e8e8"/></svg>
<div class="a" style="left:706.6px;top:358.5px;width:44.4px;height:11.8px;background:#ffffff;"></div>
<div class="a" style="left:708.2px;top:360px;width:41.2px;height:8.8px;background:#e2e2e2;"></div>
<div class="a" style="left:709.7px;top:360.8px;width:7.2px;height:7.2px;background:#262626;"></div>
<div class="t" id="t101" style="left:719.8px;top:359.8px;font-size:9px;color:#8a8a8a;font-family:'Liberation Sans',sans-serif;transform:scaleX(1.013);">[黒]</div>
<div class="a" style="left:752px;top:358.5px;width:10px;height:11.8px;background:#535353;border:1px solid #5c5c5c;"></div>
<svg class="a" style="left:752px;top:358.5px;" width="10" height="11.8" viewBox="0 0 10 11.8"><path d="M2.5 4.7 L5.0 7.2 L7.5 4.7" stroke="#8a8a8a" stroke-width="1.1" fill="none"/></svg>
<div class="a" style="left:618px;top:381.8px;width:7.5px;height:7.5px;border:1px solid #bdbdbd"></div>
<div class="t" id="t102" style="left:629.4px;top:381.15px;font-size:9.5px;color:#e0e0e0;font-family:'Liberation Sans',sans-serif;transform:scaleX(0.780);">囲み罫</div>
<svg class="a" style="left:695.4px;top:380px;" width="10.5" height="11" viewBox="0 0 10.5 11"><rect x="0.6" y="0.6" width="9.3" height="9.8" rx="1.5" fill="none" stroke="#c8c8c8" stroke-width="1.1"/><path d="M5 2.5 L5 8.5 M3.2 2.5 Q1.8 4 3.2 5.2 L5 5.2" stroke="#e0e0e0" stroke-width="1.3" fill="#e0e0e0"/></svg>
<div class="a" style="left:706.6px;top:379.5px;width:44.4px;height:11.8px;background:#ffffff;"></div>
<div class="a" style="left:708.2px;top:381px;width:41.2px;height:8.8px;background:#e2e2e2;"></div>
<div class="a" style="left:709.7px;top:381.8px;width:7.2px;height:7.2px;background:#262626;"></div>
<div class="t" id="t103" style="left:719.8px;top:381.4px;font-size:9px;color:#8a8a8a;font-family:'Liberation Sans',sans-serif;transform:scaleX(1.013);">[黒]</div>
<div class="a" style="left:752px;top:379.5px;width:10px;height:11.8px;background:#535353;border:1px solid #5c5c5c;"></div>
<svg class="a" style="left:752px;top:379.5px;" width="10" height="11.8" viewBox="0 0 10 11.8"><path d="M2.5 4.7 L5.0 7.2 L7.5 4.7" stroke="#8a8a8a" stroke-width="1.1" fill="none"/></svg>
<div class="t" id="t104" style="left:616.8px;top:405.15px;font-size:9.5px;color:#e0e0e0;font-family:'Liberation Sans',sans-serif;transform:scaleX(0.795);">禁則処理 :</div>
<div class="a" style="left:656.8px;top:403.9px;width:104.7px;height:11.4px;background:#444444;border:1px solid #5c5c5c;"></div>
<div class="t" id="t105" style="left:659.5px;top:405.15px;font-size:9.5px;color:#e0e0e0;font-family:'Liberation Sans',sans-serif;transform:scaleX(0.775);">強い禁則</div>
<svg class="a" style="left:752px;top:407.9px;" width="6" height="4" viewBox="0 0 6 4"><path d="M0.5 0.5 L3 3 L5.5 0.5" stroke="#bdbdbd" stroke-width="1.1" fill="none"/></svg>
<div class="t" id="t106" style="left:616.8px;top:421.15px;font-size:9.5px;color:#e0e0e0;font-family:'Liberation Sans',sans-serif;transform:scaleX(0.795);">文字組み :</div>
<div class="a" style="left:656.8px;top:420px;width:104.7px;height:11.4px;background:#444444;border:1px solid #5c5c5c;"></div>
<div class="t" id="t107" style="left:659.5px;top:421.15px;font-size:9.5px;color:#e0e0e0;font-family:'Liberation Sans',sans-serif;transform:scaleX(0.750);">行末約物半角</div>
<svg class="a" style="left:752px;top:424px;" width="6" height="4" viewBox="0 0 6 4"><path d="M0.5 0.5 L3 3 L5.5 0.5" stroke="#bdbdbd" stroke-width="1.1" fill="none"/></svg>
<div class="a" style="left:779px;top:21.8px;width:160px;height:470.2px;background:#535353;box-shadow:0 0 0 1px #3c3c3c"></div>
<div class="a" style="left:779px;top:46px;width:1px;height:446px;background:#3f3f3f;"></div>
<div class="a" style="left:780px;top:46px;width:1.5px;height:446px;background:#5a5a5a;"></div>
<div class="a" style="left:779px;top:21.8px;width:160px;height:8px;background:#363636;"></div>
<div class="a" style="left:779px;top:29.8px;width:160px;height:16.4px;background:#434343;"></div>
<div class="a" style="left:779px;top:29.8px;width:42.3px;height:16.4px;background:#535353;"></div>
<svg class="a" style="left:919px;top:24px;" width="5" height="4" viewBox="0 0 5 4"><path d="M0.5 0.5 L2 2 L0.5 3.5 M2.5 0.5 L4 2 L2.5 3.5" stroke="#aaa" stroke-width="0.9" fill="none"/></svg>
<svg class="a" style="left:930px;top:22.8px;" width="6" height="6" viewBox="0 0 6 6"><path d="M0.7 0.7 L5.3 5.3 M5.3 0.7 L0.7 5.3" stroke="#cfcfcf" stroke-width="1.2"/></svg>
<div class="t" id="t108" style="left:785px;top:33.75px;font-size:9.5px;color:#e0e0e0;font-family:'Liberation Sans',sans-serif;transform:scaleX(0.580);">プロパティ</div>
<div class="t" id="t109" style="left:827.4px;top:33.75px;font-size:9.5px;color:#808080;font-family:'Liberation Sans',sans-serif;transform:scaleX(0.653);">ページ</div>
<div class="t" id="t110" style="left:862px;top:34px;font-size:9px;color:#808080;font-family:'Liberation Sans',sans-serif;transform:scaleX(0.661);">CC ライブラリ</div>
<div class="a" style="left:931.5px;top:49px;width:4.3px;height:443px;background:#474747;border-radius:2px"></div>
<div class="a" style="left:931.5px;top:49px;width:4.3px;height:340.5px;background:#6c6c6c;border-radius:2px"></div>
<div class="t" id="t111" style="left:785.2px;top:52.05px;font-size:10.5px;color:#ececec;font-family:'Liberation Sans',sans-serif;transform:scaleX(0.691);">テキストフレーム</div>
<div class="a" style="left:781px;top:67px;width:150px;height:1px;background:#494949;"></div>
<div class="t" id="t112" style="left:785.2px;top:73.55px;font-size:9.5px;color:#e0e0e0;font-family:'Liberation Sans',sans-serif;transform:scaleX(0.750);">変形</div>
<svg class="a" style="left:789px;top:94px;" width="17" height="17" viewBox="0 0 17 17"><rect x="0.6" y="0.6" width="4.2" height="4.2" rx="0.5" fill="#ffffff" stroke="#ffffff" stroke-width="0.9"/><rect x="6.2" y="0.6" width="4.2" height="4.2" rx="0.5" fill="none" stroke="#bdbdbd" stroke-width="0.9"/><rect x="11.8" y="0.6" width="4.2" height="4.2" rx="0.5" fill="none" stroke="#bdbdbd" stroke-width="0.9"/><rect x="0.6" y="6.2" width="4.2" height="4.2" rx="0.5" fill="none" stroke="#bdbdbd" stroke-width="0.9"/><rect x="6.2" y="6.2" width="4.2" height="4.2" rx="0.5" fill="none" stroke="#bdbdbd" stroke-width="0.9"/><rect x="11.8" y="6.2" width="4.2" height="4.2" rx="0.5" fill="none" stroke="#bdbdbd" stroke-width="0.9"/><rect x="0.6" y="11.8" width="4.2" height="4.2" rx="0.5" fill="none" stroke="#bdbdbd" stroke-width="0.9"/><rect x="6.2" y="11.8" width="4.2" height="4.2" rx="0.5" fill="none" stroke="#bdbdbd" stroke-width="0.9"/><rect x="11.8" y="11.8" width="4.2" height="4.2" rx="0.5" fill="none" stroke="#bdbdbd" stroke-width="0.9"/></svg>
<div class="t" id="t113" style="left:809.5px;top:90.7px;font-size:9px;color:#e0e0e0;font-family:'Liberation Sans',sans-serif;">X :</div>
<div class="a" style="left:823.3px;top:89.4px;width:33.4px;height:11.2px;background:#444444;border:1px solid #5c5c5c;"></div>
<div class="t" id="t114" style="left:825px;top:90.45px;font-size:9.5px;color:#e0e0e0;font-family:'Liberation Sans',sans-serif;transform:scaleX(0.874);">16.75 m</div>
<div class="t" id="t115" style="left:859.5px;top:90.7px;font-size:9px;color:#e0e0e0;font-family:'Liberation Sans',sans-serif;transform:scaleX(0.815);">W :</div>
<div class="a" style="left:873.8px;top:89.4px;width:34.2px;height:11.2px;background:#444444;border:1px solid #5c5c5c;"></div>
<div class="t" id="t116" style="left:876px;top:90.45px;font-size:9.5px;color:#e0e0e0;font-family:'Liberation Sans',sans-serif;transform:scaleX(0.962);">41.5 mr</div>
<div class="t" id="t117" style="left:809.5px;top:106.5px;font-size:9px;color:#e0e0e0;font-family:'Liberation Sans',sans-serif;transform:scaleX(1.014);">Y :</div>
<div class="a" style="left:823.3px;top:105.2px;width:33.4px;height:11.2px;background:#444444;border:1px solid #5c5c5c;"></div>
<div class="t" id="t118" style="left:825px;top:106.25px;font-size:9.5px;color:#e0e0e0;font-family:'Liberation Sans',sans-serif;transform:scaleX(0.874);">25.5 mn</div>
<div class="t" id="t119" style="left:859.5px;top:106.5px;font-size:9px;color:#e0e0e0;font-family:'Liberation Sans',sans-serif;transform:scaleX(0.955);">H :</div>
<div class="a" style="left:873.8px;top:105.2px;width:34.2px;height:11.2px;background:#444444;border:1px solid #5c5c5c;"></div>
<div class="t" id="t120" style="left:876px;top:106.25px;font-size:9.5px;color:#e0e0e0;font-family:'Liberation Sans',sans-serif;transform:scaleX(0.917);">11 mm</div>
<svg class="a" style="left:913px;top:97px;" width="10" height="11" viewBox="0 0 10 11"><ellipse cx="5" cy="3.6" rx="2.1" ry="2.5" fill="none" stroke="#bdbdbd" stroke-width="1"/><ellipse cx="5" cy="7.4" rx="2.1" ry="2.5" fill="none" stroke="#bdbdbd" stroke-width="1"/><path d="M1 1 L9 10" stroke="#bdbdbd" stroke-width="1"/></svg>
<svg class="a" style="left:917px;top:125.2px;" width="11" height="3" viewBox="0 0 11 3"><circle cx="1.5" cy="1.5" r="1.3" fill="#ddd"/><circle cx="5.5" cy="1.5" r="1.3" fill="#ddd"/><circle cx="9.5" cy="1.5" r="1.3" fill="#ddd"/></svg>
<div class="a" style="left:781px;top:131px;width:150px;height:3.5px;background:#4f4f4f;"></div>
<div class="a" style="left:781px;top:134.5px;width:150px;height:1px;background:#484848;"></div>
<div class="t" id="t121" style="left:786px;top:141.8px;font-size:10px;color:#ececec;font-family:'Liberation Sans',sans-serif;transform:scaleX(0.746);">テキストスタイル</div>
<div class="a" style="left:785px;top:155.3px;width:138.6px;height:14.2px;background:#4a4a4a;border:1px solid #5e5e5e;"></div>
<div class="a" style="left:786px;top:156.3px;width:67.5px;height:12.2px;background:#2e2e2e;"></div>
<div class="t" id="t122" style="left:795.7px;top:157.6px;font-size:10px;color:#4a9ff5;font-family:'Liberation Sans',sans-serif;transform:scaleX(0.772);">段落スタイル</div>
<div class="t" id="t123" style="left:865px;top:157.6px;font-size:10px;color:#ececec;font-family:'Liberation Sans',sans-serif;transform:scaleX(0.777);">文字スタイル</div>
<div class="a" style="left:785px;top:174px;width:138.6px;height:21.6px;background:#474747;border:1px solid #5e5e5e;"></div>
<div class="a" style="left:910px;top:175.5px;width:12.2px;height:18.6px;background:#424242;"></div>
<div class="a" style="left:788.4px;top:177.6px;width:16.4px;height:15.4px;background:#ffffff;"></div>
<div class="t" id="t124" style="left:790px;top:180.3px;font-size:11px;color:#2a2a2a;font-family:'Liberation Serif',serif;transform:scaleX(0.966);-webkit-text-stroke:0;">Ag</div>
<div class="t" id="t125" style="left:808px;top:180.25px;font-size:9.5px;color:#e0e0e0;font-family:'Liberation Sans',sans-serif;transform:scaleX(0.846);">[基本段落]+</div>
<svg class="a" style="left:914.5px;top:183px;" width="7" height="4" viewBox="0 0 7 4"><path d="M0.5 0.5 L3.5 3.2 L6.5 0.5" stroke="#bdbdbd" stroke-width="1.1" fill="none"/></svg>
<div class="t" id="t126" style="left:789.5px;top:202px;font-size:10px;color:#bdbdbd;font-family:'Liberation Sans',sans-serif;transform:scaleX(1.116);">¶</div>
<div class="a" style="left:796.5px;top:210px;width:1.5px;height:1.5px;background:#bdbdbd;"></div>
<svg class="a" style="left:868px;top:201px;" width="11" height="11" viewBox="0 0 11 11"><rect x="4" y="4" width="6.5" height="6.5" fill="none" stroke="#bdbdbd" stroke-width="1"/><path d="M0.5 5 L5 5 M3 3 L5 5 L3 7 M5 0.5 L5 3" stroke="#bdbdbd" stroke-width="1" fill="none"/></svg>
<svg class="a" style="left:890px;top:201px;" width="11" height="11" viewBox="0 0 11 11"><path d="M4.5 1 L4.5 10 M7 1 L7 10 M4 1 Q0.5 1 0.5 4 Q0.5 6.5 4 6.5" stroke="#bdbdbd" stroke-width="1.1" fill="#bdbdbd"/><path d="M8 7 L10.5 4.5" stroke="#bdbdbd" stroke-width="1"/></svg>
<svg class="a" style="left:911px;top:201px;" width="11" height="11" viewBox="0 0 11 11"><rect x="1" y="1" width="9" height="9" fill="none" stroke="#bdbdbd" stroke-width="1"/><path d="M5.5 3 L5.5 8 M3 5.5 L8 5.5" stroke="#bdbdbd" stroke-width="1"/></svg>
<div class="a" style="left:781px;top:214px;width:150px;height:5px;background:#505050;"></div>
<div class="a" style="left:781px;top:219px;width:150px;height:1px;background:#484848;"></div>
<div class="t" id="t127" style="left:786px;top:224.7px;font-size:10px;color:#ececec;font-family:'Liberation Sans',sans-serif;transform:scaleX(0.750);">アピアランス</div>
<svg class="a" style="left:786.2px;top:239.8px;" width="11" height="10.5" viewBox="0 0 11 10.5"><rect x="0.5" y="0.5" width="10" height="9.5" fill="#ffffff" stroke="#bbbbbb" stroke-width="1"/><path d="M1 9.5 L10 1" stroke="#d4181f" stroke-width="1.6"/></svg>
<div class="t" id="t128" style="left:803.5px;top:240.45px;font-size:9.5px;color:#e0e0e0;font-family:'Liberation Sans',sans-serif;transform:scaleX(0.725);">塗り</div>
<svg class="a" style="left:786.2px;top:256.4px;" width="11" height="10.6" viewBox="0 0 11 10.6"><rect x="0.5" y="0.5" width="10" height="9.6" fill="#ffffff" stroke="#bbbbbb" stroke-width="1"/><rect x="3.1" y="3.0" width="4.8" height="4.7" fill="#333" /><path d="M1 9.6 L10 1" stroke="#d4181f" stroke-width="1.6"/></svg>
<div class="t" id="t129" style="left:803.5px;top:257.5px;font-size:8px;color:#e0e0e0;font-family:'Liberation Sans',sans-serif;transform:scaleX(0.875);">線</div>
<div class="a" style="left:803.5px;top:266px;width:8px;height:0.7px;background:#aaa;"></div>
<div class="a" style="left:843px;top:256px;width:9px;height:11px;background:#444444;border:1px solid #5c5c5c;"></div>
<svg class="a" style="left:843px;top:256px;" width="9" height="11" viewBox="0 0 9 11"><path d="M2.2 4.4 Q4.5 -0.1 6.8 4.4 M2.2 6.6 Q4.5 11.1 6.8 6.6" stroke="#bdbdbd" stroke-width="1" fill="none"/></svg>
<div class="a" style="left:852.5px;top:256px;width:24.5px;height:11px;background:#444444;border:1px solid #5c5c5c;"></div>
<div class="t" id="t130" style="left:855.3px;top:257.05px;font-size:9.5px;color:#e0e0e0;font-family:'Liberation Sans',sans-serif;transform:scaleX(0.933);">0 mn</div>
<div class="a" style="left:877.2px;top:256px;width:8px;height:11px;background:#444444;border:1px solid #5c5c5c;"></div>
<svg class="a" style="left:877.2px;top:256px;" width="8" height="11" viewBox="0 0 8 11"><path d="M1.5 4.3 L4.0 6.8 L6.5 4.3" stroke="#bdbdbd" stroke-width="1.1" fill="none"/></svg>
<div class="a" style="left:889.8px;top:256px;width:23px;height:12.6px;background:#ffffff;"></div>
<div class="a" style="left:892px;top:259.5px;width:18.5px;height:5.5px;background:#000;"></div>
<div class="a" style="left:914.5px;top:256px;width:9px;height:12.6px;background:#444444;border:1px solid #5c5c5c;"></div>
<svg class="a" style="left:914.5px;top:256px;" width="9" height="12.6" viewBox="0 0 9 12.6"><path d="M2.0 5.1 L4.5 7.6 L7.0 5.1" stroke="#bdbdbd" stroke-width="1.1" fill="none"/></svg>
<svg class="a" style="left:786px;top:272px;" width="12" height="12" viewBox="0 0 12 12"><rect x="2.5" y="2.5" width="7" height="7" fill="none" stroke="#2d8cf0" stroke-width="0.9" stroke-dasharray="1.5 1"/><circle cx="2.5" cy="2.5" r="1.7" fill="#2d8cf0"/><circle cx="9.5" cy="2.5" r="1.7" fill="#2d8cf0"/><circle cx="2.5" cy="9.5" r="1.7" fill="#2d8cf0"/><circle cx="9.5" cy="9.5" r="1.7" fill="#2d8cf0"/></svg>
<div class="t" id="t131" style="left:803.5px;top:273.8px;font-size:8px;color:#e0e0e0;font-family:'Liberation Sans',sans-serif;transform:scaleX(0.875);">角</div>
<div class="a" style="left:803.5px;top:282.3px;width:8px;height:0.7px;background:#999;"></div>
<div class="a" style="left:843px;top:272.7px;width:9px;height:11.3px;background:#444444;border:1px solid #5c5c5c;"></div>
<svg class="a" style="left:843px;top:272.7px;" width="9" height="11.3" viewBox="0 0 9 11.3"><path d="M2.2 4.6 Q4.5 0.1 6.8 4.6 M2.2 6.8 Q4.5 11.2 6.8 6.8" stroke="#bdbdbd" stroke-width="1" fill="none"/></svg>
<div class="a" style="left:852.5px;top:272.7px;width:33.3px;height:11.3px;background:#444444;border:1px solid #5c5c5c;"></div>
<div class="t" id="t132" style="left:855.3px;top:273.75px;font-size:9.5px;color:#e0e0e0;font-family:'Liberation Sans',sans-serif;transform:scaleX(0.897);">5 mm</div>
<div class="a" style="left:889.8px;top:272.7px;width:23px;height:12.2px;background:#ffffff;"></div>
<div class="a" style="left:891.5px;top:274.5px;width:18.5px;height:8.6px;background:#e2e2e2;"></div>
<div class="a" style="left:910.5px;top:274.5px;width:1.3px;height:10px;background:#444;"></div>
<div class="a" style="left:914.5px;top:272.7px;width:9px;height:12.2px;background:#444444;border:1px solid #5c5c5c;"></div>
<svg class="a" style="left:914.5px;top:272.7px;" width="9" height="12.2" viewBox="0 0 9 12.2"><path d="M2.0 4.9 L4.5 7.4 L7.0 4.9" stroke="#bdbdbd" stroke-width="1.1" fill="none"/></svg>
<svg class="a" style="left:786px;top:289.5px;" width="11" height="11" viewBox="0 0 11 11"><rect x="0.5" y="0.5" width="10" height="10" fill="none" stroke="#bdbdbd" stroke-width="1"/><rect x="2.5" y="2.5" width="2" height="2" fill="#bdbdbd"/><rect x="6.5" y="2.5" width="2" height="2" fill="#bdbdbd"/><rect x="4.5" y="4.5" width="2" height="2" fill="#bdbdbd"/><rect x="2.5" y="6.5" width="2" height="2" fill="#bdbdbd"/><rect x="6.5" y="6.5" width="2" height="2" fill="#bdbdbd"/></svg>
<div class="t" id="t133" style="left:803.5px;top:291.1px;font-size:8px;color:#e0e0e0;font-family:'Liberation Sans',sans-serif;transform:scaleX(0.838);">不透明度</div>
<div class="a" style="left:803.5px;top:299.5px;width:26.8px;height:0.7px;background:#999;"></div>
<div class="a" style="left:843px;top:289.3px;width:31.6px;height:11.8px;background:#444444;border:1px solid #5c5c5c;"></div>
<div class="t" id="t134" style="left:845px;top:290.75px;font-size:9.5px;color:#e0e0e0;font-family:'Liberation Sans',sans-serif;transform:scaleX(0.864);">100%</div>
<div class="a" style="left:875.6px;top:289.3px;width:10.2px;height:11.8px;background:#444444;border:1px solid #5c5c5c;"></div>
<svg class="a" style="left:875.6px;top:289.3px;" width="10.2" height="11.8" viewBox="0 0 10.2 11.8"><path d="M3.9 3.4 L6.4 5.9 L3.9 8.4" stroke="#bdbdbd" stroke-width="1.1" fill="none"/></svg>
<svg class="a" style="left:786px;top:306.5px;" width="11" height="11" viewBox="0 0 11 11"><rect x="1.5" y="1.5" width="8" height="8" fill="none" stroke="#bdbdbd" stroke-width="1" stroke-dasharray="2 1"/><path d="M0 1.5 L3 1.5 M1.5 0 L1.5 3 M8 1.5 L11 1.5 M9.5 0 L9.5 3 M0 9.5 L3 9.5 M1.5 8 L1.5 11" stroke="#bdbdbd" stroke-width="1"/></svg>
<div class="t" id="t135" style="left:803.5px;top:306.5px;font-size:11px;color:#bdbdbd;font-family:'Liberation Serif',serif;transform:scaleX(1.006);"><i>fx</i></div>
<div class="a" style="left:812px;top:314.5px;width:1.5px;height:1.5px;background:#bdbdbd;"></div>
<div class="a" style="left:781px;top:320px;width:150px;height:6px;background:#4f4f4f;"></div>
<div class="a" style="left:781px;top:326px;width:150px;height:1px;background:#484848;"></div>
<div class="t" id="t136" style="left:786px;top:329.8px;font-size:10px;color:#ececec;font-family:'Liberation Sans',sans-serif;transform:scaleX(0.750);">文字</div>
<div class="a" style="left:786.2px;top:345.4px;width:126px;height:11.6px;background:#444444;border:1px solid #5c5c5c;"></div>
<svg class="a" style="left:788px;top:347.5px;" width="10" height="7" viewBox="0 0 10 7"><circle cx="3" cy="3" r="2.2" fill="none" stroke="#bdbdbd" stroke-width="1"/><path d="M4.5 4.5 L6 6 M6.5 2.5 L8 4 L9.5 2.5" stroke="#bdbdbd" stroke-width="1" fill="none"/></svg>
<div class="t" id="t137" style="left:800.4px;top:346.65px;font-size:9.5px;color:#e0e0e0;font-family:'Liberation Sans',sans-serif;transform:scaleX(0.781);">HGｺﾞｼｯｸE</div>
<div class="a" style="left:912.2px;top:345.4px;width:11px;height:11.6px;background:#444444;border:1px solid #5c5c5c;"></div>
<svg class="a" style="left:912.2px;top:345.4px;" width="11" height="11.6" viewBox="0 0 11 11.6"><path d="M3.0 4.6 L5.5 7.1 L8.0 4.6" stroke="#bdbdbd" stroke-width="1.1" fill="none"/></svg>
<div class="a" style="left:786.2px;top:361.7px;width:126px;height:11.6px;background:#444444;border:1px solid #5c5c5c;"></div>
<div class="t" id="t138" style="left:788.2px;top:362.95px;font-size:9.5px;color:#e0e0e0;font-family:'Liberation Sans',sans-serif;transform:scaleX(0.823);">Regular</div>
<div class="a" style="left:912.2px;top:361.7px;width:11px;height:11.6px;background:#444444;border:1px solid #5c5c5c;"></div>
<svg class="a" style="left:912.2px;top:361.7px;" width="11" height="11.6" viewBox="0 0 11 11.6"><path d="M3.0 4.6 L5.5 7.1 L8.0 4.6" stroke="#bdbdbd" stroke-width="1.1" fill="none"/></svg>
<svg class="a" style="left:786px;top:378px;" width="11" height="12" viewBox="0 0 11 12"><text x="0" y="10.5" font-family="Liberation Serif" font-size="8" fill="#bdbdbd" font-weight="bold">T</text><text x="3.5" y="11" font-family="Liberation Serif" font-size="12" fill="#bdbdbd" font-weight="bold">T</text></svg>
<div class="a" style="left:801.4px;top:378px;width:10.2px;height:11.8px;background:#444444;border:1px solid #5c5c5c;"></div>
<svg class="a" style="left:801.4px;top:378px;" width="10.2" height="11.8" viewBox="0 0 10.2 11.8"><path d="M2.8 4.8 Q5.1 0.3 7.4 4.8 M2.8 7.0 Q5.1 11.5 7.4 7.0" stroke="#bdbdbd" stroke-width="1" fill="none"/></svg>
<div class="a" style="left:812.6px;top:378px;width:26px;height:11.8px;background:#444444;border:1px solid #5c5c5c;"></div>
<div class="t" id="t139" style="left:815.6px;top:379.45px;font-size:9.5px;color:#e0e0e0;font-family:'Liberation Sans',sans-serif;transform:scaleX(0.844);">25 Q</div>
<div class="a" style="left:839.6px;top:378px;width:9.6px;height:11.8px;background:#444444;border:1px solid #5c5c5c;"></div>
<svg class="a" style="left:839.6px;top:378px;" width="9.6" height="11.8" viewBox="0 0 9.6 11.8"><path d="M2.3 4.7 L4.8 7.2 L7.3 4.7" stroke="#bdbdbd" stroke-width="1.1" fill="none"/></svg>
<svg class="a" style="left:859px;top:378px;" width="11" height="12" viewBox="0 0 11 12"><path d="M5 1 L5 11 M1 2 L9 2 M2 5 L8 5 M3 8 L7 8" stroke="#bdbdbd" stroke-width="1.1"/><circle cx="1" cy="1" r="1" fill="#bdbdbd"/></svg>
<div class="a" style="left:874.6px;top:378px;width:9.6px;height:11.8px;background:#444444;border:1px solid #5c5c5c;"></div>
<svg class="a" style="left:874.6px;top:378px;" width="9.6" height="11.8" viewBox="0 0 9.6 11.8"><path d="M2.5 4.8 Q4.8 0.3 7.1 4.8 M2.5 7.0 Q4.8 11.5 7.1 7.0" stroke="#bdbdbd" stroke-width="1" fill="none"/></svg>
<div class="a" style="left:884.8px;top:378px;width:28.4px;height:11.8px;background:#444444;border:1px solid #5c5c5c;"></div>
<div class="t" id="t140" style="left:887.8px;top:379.45px;font-size:9.5px;color:#e0e0e0;font-family:'Liberation Sans',sans-serif;transform:scaleX(0.906);">(43.75</div>
<div class="a" style="left:913.2px;top:378px;width:10px;height:11.8px;background:#444444;border:1px solid #5c5c5c;"></div>
<svg class="a" style="left:913.2px;top:378px;" width="10" height="11.8" viewBox="0 0 10 11.8"><path d="M2.5 4.7 L5.0 7.2 L7.5 4.7" stroke="#bdbdbd" stroke-width="1.1" fill="none"/></svg>
<svg class="a" style="left:786px;top:395.2px;" width="11" height="12" viewBox="0 0 11 12"><path d="M1.5 1 L1.5 11" stroke="#bdbdbd" stroke-width="1" stroke-dasharray="1.5 1"/><text x="3" y="11" font-family="Liberation Serif" font-size="12" fill="#bdbdbd" font-weight="bold">T</text></svg>
<div class="a" style="left:801.4px;top:395.2px;width:10.2px;height:11.8px;background:#444444;border:1px solid #5c5c5c;"></div>
<svg class="a" style="left:801.4px;top:395.2px;" width="10.2" height="11.8" viewBox="0 0 10.2 11.8"><path d="M2.8 4.8 Q5.1 0.3 7.4 4.8 M2.8 7.0 Q5.1 11.5 7.4 7.0" stroke="#bdbdbd" stroke-width="1" fill="none"/></svg>
<div class="a" style="left:812.6px;top:395.2px;width:26px;height:11.8px;background:#444444;border:1px solid #5c5c5c;"></div>
<div class="t" id="t141" style="left:815.6px;top:396.65px;font-size:9.5px;color:#e0e0e0;font-family:'Liberation Sans',sans-serif;transform:scaleX(0.839);">100%</div>
<div class="a" style="left:839.6px;top:395.2px;width:9.6px;height:11.8px;background:#444444;border:1px solid #5c5c5c;"></div>
<svg class="a" style="left:839.6px;top:395.2px;" width="9.6" height="11.8" viewBox="0 0 9.6 11.8"><path d="M2.3 4.7 L4.8 7.2 L7.3 4.7" stroke="#bdbdbd" stroke-width="1.1" fill="none"/></svg>
<svg class="a" style="left:859px;top:395.2px;" width="11" height="12" viewBox="0 0 11 12"><text x="1.5" y="9" font-family="Liberation Serif" font-size="12" fill="#bdbdbd" font-weight="bold">T</text><path d="M0.5 11 L10.5 11" stroke="#bdbdbd" stroke-width="1"/></svg>
<div class="a" style="left:874.6px;top:395.2px;width:9.6px;height:11.8px;background:#444444;border:1px solid #5c5c5c;"></div>
<svg class="a" style="left:874.6px;top:395.2px;" width="9.6" height="11.8" viewBox="0 0 9.6 11.8"><path d="M2.5 4.8 Q4.8 0.3 7.1 4.8 M2.5 7.0 Q4.8 11.5 7.1 7.0" stroke="#bdbdbd" stroke-width="1" fill="none"/></svg>
<div class="a" style="left:884.8px;top:395.2px;width:28.4px;height:11.8px;background:#444444;border:1px solid #5c5c5c;"></div>
<div class="t" id="t142" style="left:887.8px;top:396.65px;font-size:9.5px;color:#e0e0e0;font-family:'Liberation Sans',sans-serif;transform:scaleX(0.864);">100%</div>
<div class="a" style="left:913.2px;top:395.2px;width:10px;height:11.8px;background:#444444;border:1px solid #5c5c5c;"></div>
<svg class="a" style="left:913.2px;top:395.2px;" width="10" height="11.8" viewBox="0 0 10 11.8"><path d="M2.5 4.7 L5.0 7.2 L7.5 4.7" stroke="#bdbdbd" stroke-width="1.1" fill="none"/></svg>
<svg class="a" style="left:917px;top:415.5px;" width="11" height="3" viewBox="0 0 11 3"><circle cx="1.5" cy="1.5" r="1.3" fill="#ddd"/><circle cx="5.5" cy="1.5" r="1.3" fill="#ddd"/><circle cx="9.5" cy="1.5" r="1.3" fill="#ddd"/></svg>
<div class="a" style="left:781px;top:426px;width:150px;height:1px;background:#4a4a4a;"></div>
<div class="t" id="t143" style="left:786px;top:431.7px;font-size:10px;color:#ececec;font-family:'Liberation Sans',sans-serif;transform:scaleX(0.750);">段落</div>
<div class="a" style="left:801.2px;top:447.2px;width:13.6px;height:13.2px;background:#2b2b2b;border:1px solid #1f1f1f"></div>
<svg class="a" style="left:787.7px;top:449.2px;" width="10" height="10" viewBox="0 0 10 10"><path d="M0 0.5 L10 0.5 M0 2.5 L7 2.5 M0 4.5 L10 4.5 M0 6.5 L7 6.5 M0 8.5 L10 8.5" stroke="#9c9c9c" stroke-width="1.1"/></svg>
<svg class="a" style="left:802.7px;top:449.2px;" width="10" height="10" viewBox="0 0 10 10"><path d="M0 0.5 L10 0.5 M1.5 2.5 L8.5 2.5 M0 4.5 L10 4.5 M1.5 6.5 L8.5 6.5 M0 8.5 L10 8.5" stroke="#d8d8d8" stroke-width="1.1"/></svg>
<svg class="a" style="left:817.8px;top:449.2px;" width="10" height="10" viewBox="0 0 10 10"><path d="M0 0.5 L10 0.5 M3 2.5 L10 2.5 M0 4.5 L10 4.5 M3 6.5 L10 6.5 M0 8.5 L10 8.5" stroke="#9c9c9c" stroke-width="1.1"/></svg>
<svg class="a" style="left:833.7px;top:449.2px;" width="10" height="10" viewBox="0 0 10 10"><path d="M0 0.5 L10 0.5 M0 2.5 L10 2.5 M0 4.5 L10 4.5 M0 6.5 L10 6.5 M0 8.5 L6 8.5" stroke="#9c9c9c" stroke-width="1.1"/></svg>
<svg class="a" style="left:849.6px;top:449.2px;" width="10" height="10" viewBox="0 0 10 10"><path d="M0 0.5 L10 0.5 M0 2.5 L10 2.5 M0 4.5 L10 4.5 M0 6.5 L10 6.5 M2 8.5 L8 8.5" stroke="#9c9c9c" stroke-width="1.1"/></svg>
<svg class="a" style="left:864.7px;top:449.2px;" width="10" height="10" viewBox="0 0 10 10"><path d="M0 0.5 L10 0.5 M0 2.5 L10 2.5 M0 4.5 L10 4.5 M0 6.5 L10 6.5 M4 8.5 L10 8.5" stroke="#9c9c9c" stroke-width="1.1"/></svg>
<svg class="a" style="left:880.6px;top:449.2px;" width="10" height="10" viewBox="0 0 10 10"><path d="M0 0.5 L10 0.5 M0 2.5 L10 2.5 M0 4.5 L10 4.5 M0 6.5 L10 6.5 M0 8.5 L10 8.5" stroke="#9c9c9c" stroke-width="1.1"/></svg>
<svg class="a" style="left:896.5px;top:449.2px;" width="10" height="10" viewBox="0 0 10 10"><path d="M0 0.5 L7 0.5 M2 2.5 L7 2.5 M0 4.5 L7 4.5 M2 6.5 L7 6.5 M0 8.5 L7 8.5" stroke="#9c9c9c" stroke-width="1.1"/><path d="M9.5 0 L9.5 10" stroke="#9c9c9c" stroke-width="1"/></svg>
<svg class="a" style="left:911.6px;top:449.2px;" width="10" height="10" viewBox="0 0 10 10"><path d="M3 0.5 L10 0.5 M3 2.5 L8 2.5 M3 4.5 L10 4.5 M3 6.5 L8 6.5 M3 8.5 L10 8.5" stroke="#9c9c9c" stroke-width="1.1"/><path d="M0.5 0 L0.5 10" stroke="#9c9c9c" stroke-width="1"/></svg>
<svg class="a" style="left:917px;top:470.1px;" width="11" height="3" viewBox="0 0 11 3"><circle cx="1.5" cy="1.5" r="1.3" fill="#ddd"/><circle cx="5.5" cy="1.5" r="1.3" fill="#ddd"/><circle cx="9.5" cy="1.5" r="1.3" fill="#ddd"/></svg>
<div class="a" style="left:781px;top:480px;width:150px;height:1px;background:#4a4a4a;"></div>
<div class="t" id="t144" style="left:786px;top:484px;font-size:10px;color:#ececec;font-family:'Liberation Sans',sans-serif;transform:scaleX(0.750);">整列</div>
<div class="a" style="left:939px;top:21.8px;width:21px;height:470.2px;background:#4e4e4e;"></div>
<div class="a" style="left:939px;top:21.8px;width:1px;height:470.2px;background:#3a3a3a;"></div>
<div class="a" style="left:957px;top:21.8px;width:3px;height:470.2px;background:#3f454a;"></div>
<svg class="a" style="left:942px;top:30px;" width="11" height="11" viewBox="0 0 11 11"><circle cx="5.5" cy="5.5" r="3.3" fill="#d0d0d0"/><circle cx="5.5" cy="5.5" r="1.4" fill="#4e4e4e"/></svg>
<svg class="a" style="left:942px;top:48px;" width="11" height="9" viewBox="0 0 11 9"><path d="M2 1.5 L9 1.5 M2 4.5 L9 4.5 M2 7.5 L9 7.5" stroke="#9a9a9a" stroke-width="1"/></svg>
<div class="a" style="left:940px;top:63px;width:17px;height:7px;background:#3c3c3c;"></div>
<svg class="a" style="left:949px;top:65px;" width="5" height="4" viewBox="0 0 5 4"><path d="M0.5 0.5 L2 2 L0.5 3.5 M2.5 0.5 L4 2 L2.5 3.5" stroke="#aaa" stroke-width="0.9" fill="none"/></svg>
<div class="a" style="left:939.5px;top:78.4px;width:14px;height:14.2px;background:#2f2f2f;"></div>
<svg class="a" style="left:940.5px;top:79.5px;" width="12" height="12" viewBox="0 0 12 12"><path d="M6 1 L11 4 L6 7 L1 4 Z" fill="#e8e8e8"/><path d="M1 6.5 L6 9.5 L11 6.5" stroke="#e8e8e8" stroke-width="1.4" fill="none"/></svg>
<svg class="a" style="left:941px;top:99px;" width="12" height="9" viewBox="0 0 12 9"><rect x="0.8" y="1.5" width="6.5" height="5.5" rx="2.7" fill="none" stroke="#ddd" stroke-width="1.3"/><rect x="4.7" y="1.5" width="6.5" height="5.5" rx="2.7" fill="none" stroke="#ddd" stroke-width="1.3"/></svg>
<div class="a" style="left:940px;top:116px;width:17px;height:1px;background:#3c3c3c;"></div>
<svg class="a" style="left:941px;top:124px;" width="12" height="10" viewBox="0 0 12 10"><path d="M1 1 L11 1 M1 4.5 L11 4.5 M1 8 L11 8" stroke="#ddd" stroke-width="1.3"/></svg>
<svg class="a" style="left:941.5px;top:141.5px;" width="12" height="11" viewBox="0 0 12 11"><path d="M6 1 Q11.5 1 11.5 5.5 Q11.5 8 9 8 Q7.5 8 8 9.5 Q8 11 6 11 Q0.5 11 0.5 6 Q0.5 1 6 1 Z" fill="#ddd"/><circle cx="3.5" cy="5" r="1.1" fill="#4e4e4e"/><circle cx="6" cy="3.3" r="1.1" fill="#4e4e4e"/><circle cx="8.8" cy="4.5" r="1.1" fill="#4e4e4e"/></svg>
<svg class="a" style="left:774px;top:93px;" width="4" height="7" viewBox="0 0 4 7"><path d="M3.5 0.5 L0.8 3.5 L3.5 6.5" stroke="#ccc" stroke-width="1" fill="none"/></svg>
<svg class="a" style="left:774px;top:107px;" width="4" height="7" viewBox="0 0 4 7"><path d="M3.5 0.5 L0.8 3.5 L3.5 6.5" stroke="#ccc" stroke-width="1" fill="none"/></svg>
<svg class="a" style="left:773px;top:218px;" width="5" height="6" viewBox="0 0 5 6"><path d="M0.5 3.5 L2 5 L4.5 0.5" stroke="#ccc" stroke-width="0.9" fill="none"/></svg>
<svg class="a" style="left:0;top:0" width="960" height="492" viewBox="0 0 960 492">
<g stroke="#d8121c" stroke-width="4" fill="none" stroke-linecap="round" stroke-linejoin="round">
<path d="M303 193.5 L237 184.4 M251.3 175.2 L237 184.4 L248 197.6"/>
<path d="M303 209.8 L181.5 210.8 M193.4 199.6 L181.5 210.8 L194.4 223"/>
<path d="M303 223 L192.5 238.3 M202.5 226 L192.5 238.3 L204.5 248.4"/>
</g></svg>
</body></html>
